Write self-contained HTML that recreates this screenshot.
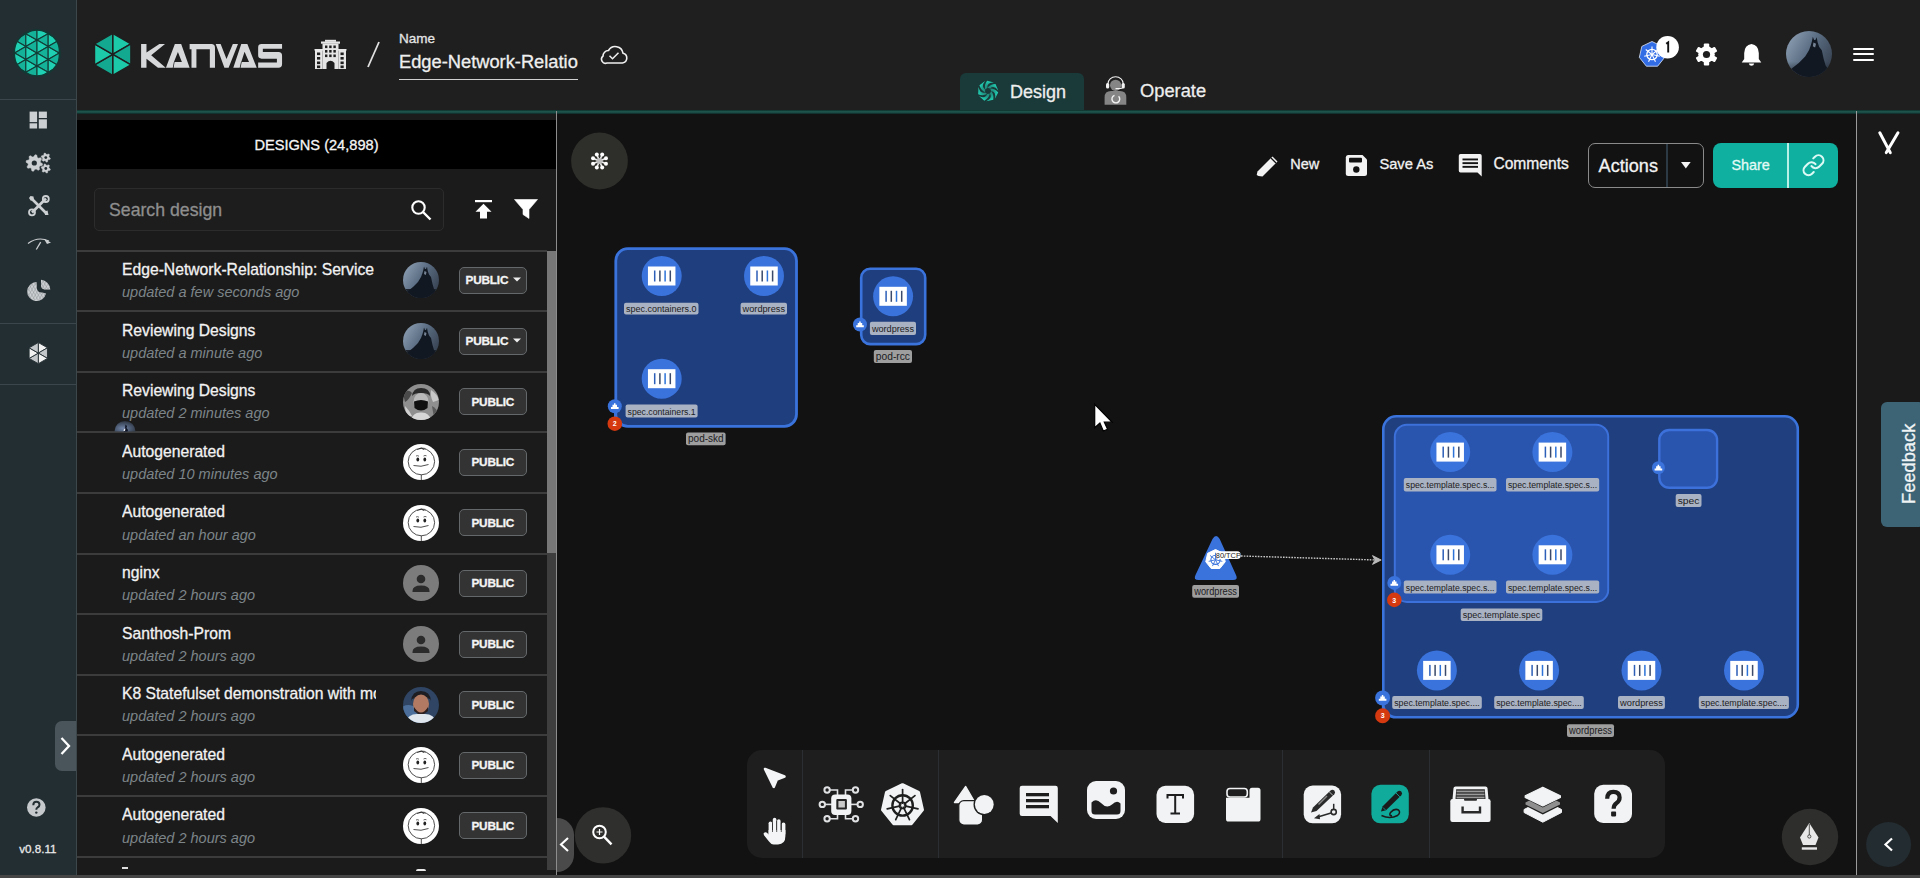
<!DOCTYPE html>
<html><head><meta charset="utf-8"><style>
html,body{margin:0;padding:0;width:1920px;height:878px;overflow:hidden;background:#121212;}
.t{position:absolute;white-space:nowrap;font-family:"Liberation Sans", sans-serif;-webkit-text-stroke:0.3px currentColor;}
.it{-webkit-text-stroke:0.15px currentColor;}
.b{position:absolute;}
</style></head><body>
<div class="b" style="left:0px;top:0px;width:1920px;height:878px;background:#121212;"></div>
<div class="b" style="left:77px;top:0px;width:1843px;height:110px;background:#1f1f1f;"></div>
<div class="b" style="left:77px;top:110px;width:1843px;height:3.799999999999997px;background:linear-gradient(#0c2e2a,#215a52 45%,#184640 70%,#0d2422);"></div>
<div class="b" style="left:77px;top:113.8px;width:479px;height:6.200000000000003px;background:#1b1b1b;"></div>
<div class="b" style="left:0px;top:0px;width:76px;height:878px;background:#232e33;"></div>
<div class="b" style="left:76px;top:0px;width:1px;height:878px;background:#3c474c;"></div>
<div class="b" style="left:0px;top:99px;width:76px;height:1px;background:#3a464b;"></div>
<div class="b" style="left:0px;top:323px;width:76px;height:1px;background:#3a464b;"></div>
<div class="b" style="left:77px;top:120px;width:479px;height:758px;background:#1b1b1b;"></div>
<div class="b" style="left:77px;top:120px;width:479px;height:49px;background:#000;"></div>
<div class="b" style="left:556px;top:111px;width:1px;height:767px;background:#8d8d8d;"></div>
<div class="b" style="left:1857px;top:113.8px;width:63px;height:764.2px;background:#1a1a1a;"></div>
<div class="b" style="left:1856px;top:111px;width:1px;height:767px;background:#9a9a9a;"></div>
<div class="b" style="left:0px;top:875px;width:1920px;height:3px;background:#454545;"></div>
<svg class="b" style="left:0px;top:0px;" width="76" height="100" viewBox="0 0 76 100"><defs><clipPath id="lc"><circle cx="37" cy="53" r="23"/></clipPath></defs><g clip-path="url(#lc)"><polygon points="-7.69,1.40 -7.69,14.30 3.48,7.85" fill="#1fd0b2" stroke="#143c36" stroke-width="1.1" stroke-linejoin="round"/><polygon points="3.48,7.85 3.48,20.75 -7.69,14.30" fill="#15b29a" stroke="#143c36" stroke-width="1.1" stroke-linejoin="round"/><polygon points="-7.69,14.30 -7.69,27.20 3.48,20.75" fill="#1fd0b2" stroke="#143c36" stroke-width="1.1" stroke-linejoin="round"/><polygon points="3.48,20.75 3.48,33.65 -7.69,27.20" fill="#15b29a" stroke="#143c36" stroke-width="1.1" stroke-linejoin="round"/><polygon points="-7.69,27.20 -7.69,40.10 3.48,33.65" fill="#1fd0b2" stroke="#143c36" stroke-width="1.1" stroke-linejoin="round"/><polygon points="3.48,33.65 3.48,46.55 -7.69,40.10" fill="#15b29a" stroke="#143c36" stroke-width="1.1" stroke-linejoin="round"/><polygon points="-7.69,40.10 -7.69,53.00 3.48,46.55" fill="#1fd0b2" stroke="#143c36" stroke-width="1.1" stroke-linejoin="round"/><polygon points="3.48,46.55 3.48,59.45 -7.69,53.00" fill="#15b29a" stroke="#143c36" stroke-width="1.1" stroke-linejoin="round"/><polygon points="-7.69,53.00 -7.69,65.90 3.48,59.45" fill="#1fd0b2" stroke="#143c36" stroke-width="1.1" stroke-linejoin="round"/><polygon points="3.48,59.45 3.48,72.35 -7.69,65.90" fill="#15b29a" stroke="#143c36" stroke-width="1.1" stroke-linejoin="round"/><polygon points="-7.69,65.90 -7.69,78.80 3.48,72.35" fill="#1fd0b2" stroke="#143c36" stroke-width="1.1" stroke-linejoin="round"/><polygon points="3.48,72.35 3.48,85.25 -7.69,78.80" fill="#15b29a" stroke="#143c36" stroke-width="1.1" stroke-linejoin="round"/><polygon points="-7.69,78.80 -7.69,91.70 3.48,85.25" fill="#1fd0b2" stroke="#143c36" stroke-width="1.1" stroke-linejoin="round"/><polygon points="3.48,85.25 3.48,98.15 -7.69,91.70" fill="#15b29a" stroke="#143c36" stroke-width="1.1" stroke-linejoin="round"/><polygon points="-7.69,91.70 -7.69,104.60 3.48,98.15" fill="#1fd0b2" stroke="#143c36" stroke-width="1.1" stroke-linejoin="round"/><polygon points="3.48,98.15 3.48,111.05 -7.69,104.60" fill="#15b29a" stroke="#143c36" stroke-width="1.1" stroke-linejoin="round"/><polygon points="3.48,7.85 3.48,20.75 14.66,14.30" fill="#1fd0b2" stroke="#143c36" stroke-width="1.1" stroke-linejoin="round"/><polygon points="14.66,1.40 14.66,14.30 3.48,7.85" fill="#15b29a" stroke="#143c36" stroke-width="1.1" stroke-linejoin="round"/><polygon points="3.48,20.75 3.48,33.65 14.66,27.20" fill="#1fd0b2" stroke="#143c36" stroke-width="1.1" stroke-linejoin="round"/><polygon points="14.66,14.30 14.66,27.20 3.48,20.75" fill="#15b29a" stroke="#143c36" stroke-width="1.1" stroke-linejoin="round"/><polygon points="3.48,33.65 3.48,46.55 14.66,40.10" fill="#1fd0b2" stroke="#143c36" stroke-width="1.1" stroke-linejoin="round"/><polygon points="14.66,27.20 14.66,40.10 3.48,33.65" fill="#15b29a" stroke="#143c36" stroke-width="1.1" stroke-linejoin="round"/><polygon points="3.48,46.55 3.48,59.45 14.66,53.00" fill="#1fd0b2" stroke="#143c36" stroke-width="1.1" stroke-linejoin="round"/><polygon points="14.66,40.10 14.66,53.00 3.48,46.55" fill="#15b29a" stroke="#143c36" stroke-width="1.1" stroke-linejoin="round"/><polygon points="3.48,59.45 3.48,72.35 14.66,65.90" fill="#1fd0b2" stroke="#143c36" stroke-width="1.1" stroke-linejoin="round"/><polygon points="14.66,53.00 14.66,65.90 3.48,59.45" fill="#15b29a" stroke="#143c36" stroke-width="1.1" stroke-linejoin="round"/><polygon points="3.48,72.35 3.48,85.25 14.66,78.80" fill="#1fd0b2" stroke="#143c36" stroke-width="1.1" stroke-linejoin="round"/><polygon points="14.66,65.90 14.66,78.80 3.48,72.35" fill="#15b29a" stroke="#143c36" stroke-width="1.1" stroke-linejoin="round"/><polygon points="3.48,85.25 3.48,98.15 14.66,91.70" fill="#1fd0b2" stroke="#143c36" stroke-width="1.1" stroke-linejoin="round"/><polygon points="14.66,78.80 14.66,91.70 3.48,85.25" fill="#15b29a" stroke="#143c36" stroke-width="1.1" stroke-linejoin="round"/><polygon points="3.48,98.15 3.48,111.05 14.66,104.60" fill="#1fd0b2" stroke="#143c36" stroke-width="1.1" stroke-linejoin="round"/><polygon points="14.66,91.70 14.66,104.60 3.48,98.15" fill="#15b29a" stroke="#143c36" stroke-width="1.1" stroke-linejoin="round"/><polygon points="14.66,1.40 14.66,14.30 25.83,7.85" fill="#1fd0b2" stroke="#143c36" stroke-width="1.1" stroke-linejoin="round"/><polygon points="25.83,7.85 25.83,20.75 14.66,14.30" fill="#15b29a" stroke="#143c36" stroke-width="1.1" stroke-linejoin="round"/><polygon points="14.66,14.30 14.66,27.20 25.83,20.75" fill="#1fd0b2" stroke="#143c36" stroke-width="1.1" stroke-linejoin="round"/><polygon points="25.83,20.75 25.83,33.65 14.66,27.20" fill="#15b29a" stroke="#143c36" stroke-width="1.1" stroke-linejoin="round"/><polygon points="14.66,27.20 14.66,40.10 25.83,33.65" fill="#1fd0b2" stroke="#143c36" stroke-width="1.1" stroke-linejoin="round"/><polygon points="25.83,33.65 25.83,46.55 14.66,40.10" fill="#15b29a" stroke="#143c36" stroke-width="1.1" stroke-linejoin="round"/><polygon points="14.66,40.10 14.66,53.00 25.83,46.55" fill="#1fd0b2" stroke="#143c36" stroke-width="1.1" stroke-linejoin="round"/><polygon points="25.83,46.55 25.83,59.45 14.66,53.00" fill="#15b29a" stroke="#143c36" stroke-width="1.1" stroke-linejoin="round"/><polygon points="14.66,53.00 14.66,65.90 25.83,59.45" fill="#1fd0b2" stroke="#143c36" stroke-width="1.1" stroke-linejoin="round"/><polygon points="25.83,59.45 25.83,72.35 14.66,65.90" fill="#15b29a" stroke="#143c36" stroke-width="1.1" stroke-linejoin="round"/><polygon points="14.66,65.90 14.66,78.80 25.83,72.35" fill="#1fd0b2" stroke="#143c36" stroke-width="1.1" stroke-linejoin="round"/><polygon points="25.83,72.35 25.83,85.25 14.66,78.80" fill="#15b29a" stroke="#143c36" stroke-width="1.1" stroke-linejoin="round"/><polygon points="14.66,78.80 14.66,91.70 25.83,85.25" fill="#1fd0b2" stroke="#143c36" stroke-width="1.1" stroke-linejoin="round"/><polygon points="25.83,85.25 25.83,98.15 14.66,91.70" fill="#15b29a" stroke="#143c36" stroke-width="1.1" stroke-linejoin="round"/><polygon points="14.66,91.70 14.66,104.60 25.83,98.15" fill="#1fd0b2" stroke="#143c36" stroke-width="1.1" stroke-linejoin="round"/><polygon points="25.83,98.15 25.83,111.05 14.66,104.60" fill="#15b29a" stroke="#143c36" stroke-width="1.1" stroke-linejoin="round"/><polygon points="25.83,7.85 25.83,20.75 37.00,14.30" fill="#1fd0b2" stroke="#143c36" stroke-width="1.1" stroke-linejoin="round"/><polygon points="37.00,1.40 37.00,14.30 25.83,7.85" fill="#15b29a" stroke="#143c36" stroke-width="1.1" stroke-linejoin="round"/><polygon points="25.83,20.75 25.83,33.65 37.00,27.20" fill="#1fd0b2" stroke="#143c36" stroke-width="1.1" stroke-linejoin="round"/><polygon points="37.00,14.30 37.00,27.20 25.83,20.75" fill="#15b29a" stroke="#143c36" stroke-width="1.1" stroke-linejoin="round"/><polygon points="25.83,33.65 25.83,46.55 37.00,40.10" fill="#1fd0b2" stroke="#143c36" stroke-width="1.1" stroke-linejoin="round"/><polygon points="37.00,27.20 37.00,40.10 25.83,33.65" fill="#15b29a" stroke="#143c36" stroke-width="1.1" stroke-linejoin="round"/><polygon points="25.83,46.55 25.83,59.45 37.00,53.00" fill="#1fd0b2" stroke="#143c36" stroke-width="1.1" stroke-linejoin="round"/><polygon points="37.00,40.10 37.00,53.00 25.83,46.55" fill="#15b29a" stroke="#143c36" stroke-width="1.1" stroke-linejoin="round"/><polygon points="25.83,59.45 25.83,72.35 37.00,65.90" fill="#1fd0b2" stroke="#143c36" stroke-width="1.1" stroke-linejoin="round"/><polygon points="37.00,53.00 37.00,65.90 25.83,59.45" fill="#15b29a" stroke="#143c36" stroke-width="1.1" stroke-linejoin="round"/><polygon points="25.83,72.35 25.83,85.25 37.00,78.80" fill="#1fd0b2" stroke="#143c36" stroke-width="1.1" stroke-linejoin="round"/><polygon points="37.00,65.90 37.00,78.80 25.83,72.35" fill="#15b29a" stroke="#143c36" stroke-width="1.1" stroke-linejoin="round"/><polygon points="25.83,85.25 25.83,98.15 37.00,91.70" fill="#1fd0b2" stroke="#143c36" stroke-width="1.1" stroke-linejoin="round"/><polygon points="37.00,78.80 37.00,91.70 25.83,85.25" fill="#15b29a" stroke="#143c36" stroke-width="1.1" stroke-linejoin="round"/><polygon points="25.83,98.15 25.83,111.05 37.00,104.60" fill="#1fd0b2" stroke="#143c36" stroke-width="1.1" stroke-linejoin="round"/><polygon points="37.00,91.70 37.00,104.60 25.83,98.15" fill="#15b29a" stroke="#143c36" stroke-width="1.1" stroke-linejoin="round"/><polygon points="37.00,1.40 37.00,14.30 48.17,7.85" fill="#1fd0b2" stroke="#143c36" stroke-width="1.1" stroke-linejoin="round"/><polygon points="48.17,7.85 48.17,20.75 37.00,14.30" fill="#15b29a" stroke="#143c36" stroke-width="1.1" stroke-linejoin="round"/><polygon points="37.00,14.30 37.00,27.20 48.17,20.75" fill="#1fd0b2" stroke="#143c36" stroke-width="1.1" stroke-linejoin="round"/><polygon points="48.17,20.75 48.17,33.65 37.00,27.20" fill="#15b29a" stroke="#143c36" stroke-width="1.1" stroke-linejoin="round"/><polygon points="37.00,27.20 37.00,40.10 48.17,33.65" fill="#1fd0b2" stroke="#143c36" stroke-width="1.1" stroke-linejoin="round"/><polygon points="48.17,33.65 48.17,46.55 37.00,40.10" fill="#15b29a" stroke="#143c36" stroke-width="1.1" stroke-linejoin="round"/><polygon points="37.00,40.10 37.00,53.00 48.17,46.55" fill="#1fd0b2" stroke="#143c36" stroke-width="1.1" stroke-linejoin="round"/><polygon points="48.17,46.55 48.17,59.45 37.00,53.00" fill="#15b29a" stroke="#143c36" stroke-width="1.1" stroke-linejoin="round"/><polygon points="37.00,53.00 37.00,65.90 48.17,59.45" fill="#1fd0b2" stroke="#143c36" stroke-width="1.1" stroke-linejoin="round"/><polygon points="48.17,59.45 48.17,72.35 37.00,65.90" fill="#15b29a" stroke="#143c36" stroke-width="1.1" stroke-linejoin="round"/><polygon points="37.00,65.90 37.00,78.80 48.17,72.35" fill="#1fd0b2" stroke="#143c36" stroke-width="1.1" stroke-linejoin="round"/><polygon points="48.17,72.35 48.17,85.25 37.00,78.80" fill="#15b29a" stroke="#143c36" stroke-width="1.1" stroke-linejoin="round"/><polygon points="37.00,78.80 37.00,91.70 48.17,85.25" fill="#1fd0b2" stroke="#143c36" stroke-width="1.1" stroke-linejoin="round"/><polygon points="48.17,85.25 48.17,98.15 37.00,91.70" fill="#15b29a" stroke="#143c36" stroke-width="1.1" stroke-linejoin="round"/><polygon points="37.00,91.70 37.00,104.60 48.17,98.15" fill="#1fd0b2" stroke="#143c36" stroke-width="1.1" stroke-linejoin="round"/><polygon points="48.17,98.15 48.17,111.05 37.00,104.60" fill="#15b29a" stroke="#143c36" stroke-width="1.1" stroke-linejoin="round"/><polygon points="48.17,7.85 48.17,20.75 59.34,14.30" fill="#1fd0b2" stroke="#143c36" stroke-width="1.1" stroke-linejoin="round"/><polygon points="59.34,1.40 59.34,14.30 48.17,7.85" fill="#15b29a" stroke="#143c36" stroke-width="1.1" stroke-linejoin="round"/><polygon points="48.17,20.75 48.17,33.65 59.34,27.20" fill="#1fd0b2" stroke="#143c36" stroke-width="1.1" stroke-linejoin="round"/><polygon points="59.34,14.30 59.34,27.20 48.17,20.75" fill="#15b29a" stroke="#143c36" stroke-width="1.1" stroke-linejoin="round"/><polygon points="48.17,33.65 48.17,46.55 59.34,40.10" fill="#1fd0b2" stroke="#143c36" stroke-width="1.1" stroke-linejoin="round"/><polygon points="59.34,27.20 59.34,40.10 48.17,33.65" fill="#15b29a" stroke="#143c36" stroke-width="1.1" stroke-linejoin="round"/><polygon points="48.17,46.55 48.17,59.45 59.34,53.00" fill="#1fd0b2" stroke="#143c36" stroke-width="1.1" stroke-linejoin="round"/><polygon points="59.34,40.10 59.34,53.00 48.17,46.55" fill="#15b29a" stroke="#143c36" stroke-width="1.1" stroke-linejoin="round"/><polygon points="48.17,59.45 48.17,72.35 59.34,65.90" fill="#1fd0b2" stroke="#143c36" stroke-width="1.1" stroke-linejoin="round"/><polygon points="59.34,53.00 59.34,65.90 48.17,59.45" fill="#15b29a" stroke="#143c36" stroke-width="1.1" stroke-linejoin="round"/><polygon points="48.17,72.35 48.17,85.25 59.34,78.80" fill="#1fd0b2" stroke="#143c36" stroke-width="1.1" stroke-linejoin="round"/><polygon points="59.34,65.90 59.34,78.80 48.17,72.35" fill="#15b29a" stroke="#143c36" stroke-width="1.1" stroke-linejoin="round"/><polygon points="48.17,85.25 48.17,98.15 59.34,91.70" fill="#1fd0b2" stroke="#143c36" stroke-width="1.1" stroke-linejoin="round"/><polygon points="59.34,78.80 59.34,91.70 48.17,85.25" fill="#15b29a" stroke="#143c36" stroke-width="1.1" stroke-linejoin="round"/><polygon points="48.17,98.15 48.17,111.05 59.34,104.60" fill="#1fd0b2" stroke="#143c36" stroke-width="1.1" stroke-linejoin="round"/><polygon points="59.34,91.70 59.34,104.60 48.17,98.15" fill="#15b29a" stroke="#143c36" stroke-width="1.1" stroke-linejoin="round"/><polygon points="59.34,1.40 59.34,14.30 70.52,7.85" fill="#1fd0b2" stroke="#143c36" stroke-width="1.1" stroke-linejoin="round"/><polygon points="70.52,7.85 70.52,20.75 59.34,14.30" fill="#15b29a" stroke="#143c36" stroke-width="1.1" stroke-linejoin="round"/><polygon points="59.34,14.30 59.34,27.20 70.52,20.75" fill="#1fd0b2" stroke="#143c36" stroke-width="1.1" stroke-linejoin="round"/><polygon points="70.52,20.75 70.52,33.65 59.34,27.20" fill="#15b29a" stroke="#143c36" stroke-width="1.1" stroke-linejoin="round"/><polygon points="59.34,27.20 59.34,40.10 70.52,33.65" fill="#1fd0b2" stroke="#143c36" stroke-width="1.1" stroke-linejoin="round"/><polygon points="70.52,33.65 70.52,46.55 59.34,40.10" fill="#15b29a" stroke="#143c36" stroke-width="1.1" stroke-linejoin="round"/><polygon points="59.34,40.10 59.34,53.00 70.52,46.55" fill="#1fd0b2" stroke="#143c36" stroke-width="1.1" stroke-linejoin="round"/><polygon points="70.52,46.55 70.52,59.45 59.34,53.00" fill="#15b29a" stroke="#143c36" stroke-width="1.1" stroke-linejoin="round"/><polygon points="59.34,53.00 59.34,65.90 70.52,59.45" fill="#1fd0b2" stroke="#143c36" stroke-width="1.1" stroke-linejoin="round"/><polygon points="70.52,59.45 70.52,72.35 59.34,65.90" fill="#15b29a" stroke="#143c36" stroke-width="1.1" stroke-linejoin="round"/><polygon points="59.34,65.90 59.34,78.80 70.52,72.35" fill="#1fd0b2" stroke="#143c36" stroke-width="1.1" stroke-linejoin="round"/><polygon points="70.52,72.35 70.52,85.25 59.34,78.80" fill="#15b29a" stroke="#143c36" stroke-width="1.1" stroke-linejoin="round"/><polygon points="59.34,78.80 59.34,91.70 70.52,85.25" fill="#1fd0b2" stroke="#143c36" stroke-width="1.1" stroke-linejoin="round"/><polygon points="70.52,85.25 70.52,98.15 59.34,91.70" fill="#15b29a" stroke="#143c36" stroke-width="1.1" stroke-linejoin="round"/><polygon points="59.34,91.70 59.34,104.60 70.52,98.15" fill="#1fd0b2" stroke="#143c36" stroke-width="1.1" stroke-linejoin="round"/><polygon points="70.52,98.15 70.52,111.05 59.34,104.60" fill="#15b29a" stroke="#143c36" stroke-width="1.1" stroke-linejoin="round"/><polygon points="70.52,7.85 70.52,20.75 81.69,14.30" fill="#1fd0b2" stroke="#143c36" stroke-width="1.1" stroke-linejoin="round"/><polygon points="81.69,1.40 81.69,14.30 70.52,7.85" fill="#15b29a" stroke="#143c36" stroke-width="1.1" stroke-linejoin="round"/><polygon points="70.52,20.75 70.52,33.65 81.69,27.20" fill="#1fd0b2" stroke="#143c36" stroke-width="1.1" stroke-linejoin="round"/><polygon points="81.69,14.30 81.69,27.20 70.52,20.75" fill="#15b29a" stroke="#143c36" stroke-width="1.1" stroke-linejoin="round"/><polygon points="70.52,33.65 70.52,46.55 81.69,40.10" fill="#1fd0b2" stroke="#143c36" stroke-width="1.1" stroke-linejoin="round"/><polygon points="81.69,27.20 81.69,40.10 70.52,33.65" fill="#15b29a" stroke="#143c36" stroke-width="1.1" stroke-linejoin="round"/><polygon points="70.52,46.55 70.52,59.45 81.69,53.00" fill="#1fd0b2" stroke="#143c36" stroke-width="1.1" stroke-linejoin="round"/><polygon points="81.69,40.10 81.69,53.00 70.52,46.55" fill="#15b29a" stroke="#143c36" stroke-width="1.1" stroke-linejoin="round"/><polygon points="70.52,59.45 70.52,72.35 81.69,65.90" fill="#1fd0b2" stroke="#143c36" stroke-width="1.1" stroke-linejoin="round"/><polygon points="81.69,53.00 81.69,65.90 70.52,59.45" fill="#15b29a" stroke="#143c36" stroke-width="1.1" stroke-linejoin="round"/><polygon points="70.52,72.35 70.52,85.25 81.69,78.80" fill="#1fd0b2" stroke="#143c36" stroke-width="1.1" stroke-linejoin="round"/><polygon points="81.69,65.90 81.69,78.80 70.52,72.35" fill="#15b29a" stroke="#143c36" stroke-width="1.1" stroke-linejoin="round"/><polygon points="70.52,85.25 70.52,98.15 81.69,91.70" fill="#1fd0b2" stroke="#143c36" stroke-width="1.1" stroke-linejoin="round"/><polygon points="81.69,78.80 81.69,91.70 70.52,85.25" fill="#15b29a" stroke="#143c36" stroke-width="1.1" stroke-linejoin="round"/><polygon points="70.52,98.15 70.52,111.05 81.69,104.60" fill="#1fd0b2" stroke="#143c36" stroke-width="1.1" stroke-linejoin="round"/><polygon points="81.69,91.70 81.69,104.60 70.52,98.15" fill="#15b29a" stroke="#143c36" stroke-width="1.1" stroke-linejoin="round"/></g><circle cx="37" cy="53" r="23" fill="none" stroke="#113a34" stroke-width="1.5"/></svg>
<svg class="b" style="left:80px;top:20px;" width="70" height="70" viewBox="80 20 70 70"><polygon points="112.7,54.3 112.70,33.30 130.89,43.80" fill="#1ccaa9" stroke="#1f1f1f" stroke-width="1.4" stroke-linejoin="round"/><polygon points="112.7,54.3 130.89,43.80 130.89,64.80" fill="#13a890" stroke="#1f1f1f" stroke-width="1.4" stroke-linejoin="round"/><polygon points="112.7,54.3 130.89,64.80 112.70,75.30" fill="#1ccaa9" stroke="#1f1f1f" stroke-width="1.4" stroke-linejoin="round"/><polygon points="112.7,54.3 112.70,75.30 94.51,64.80" fill="#13a890" stroke="#1f1f1f" stroke-width="1.4" stroke-linejoin="round"/><polygon points="112.7,54.3 94.51,64.80 94.51,43.80" fill="#1ccaa9" stroke="#1f1f1f" stroke-width="1.4" stroke-linejoin="round"/><polygon points="112.7,54.3 94.51,43.80 112.70,33.30" fill="#13a890" stroke="#1f1f1f" stroke-width="1.4" stroke-linejoin="round"/></svg>
<svg class="b" style="left:135px;top:38px;" width="155" height="34" viewBox="0 0 3306 725"><path d="M130,130 H245 V310 L520,130 H640 L345,370 L655,635 H490 L245,440 V635 H130 Z M660,635 L850,130 H985 L1165,635 Z M1165,130 H1630 Q1706,130 1706,206 V635 H1596 V240 H1310 V635 H1205 V240 H1165 Z M1721.7,130 H1826.7 L1951.7,450 L2086.7,130 H2196.7 L1996.7,635 H1906.7 Z M2096.7,635 L2266.7,130 H2396.7 L2596.7,635 Z M2700,130 H3136.7 V230 H2726.7 V300 H3060 Q3136.7,300 3136.7,380 V555 Q3136.7,635 3060,635 H2626.7 V520 H3026.7 V440 H2700 Q2626.7,440 2626.7,370 V200 Q2626.7,130 2700,130 Z" fill="#d6d8da"/><path d="M830,510 L915,300 L1000,510 Z M805,640 L830,505 L845,505 L822,640 Z M2266.7,510 L2336.7,295 L2431.7,510 Z M2232,640 L2262,505 L2277,505 L2250,640 Z" fill="#1f1f1f"/></svg>
<svg class="b" style="left:300px;top:30px;" width="60" height="45" viewBox="300 30 60 45"><rect x="322.5" y="43.5" width="16" height="25.5" fill="#e6e6e6"/><rect x="321" y="41.5" width="19" height="2.2" fill="#e6e6e6"/><rect x="325" y="39.8" width="11" height="2" fill="#e6e6e6"/><rect x="315" y="50" width="7.5" height="19" fill="#e6e6e6"/><rect x="338.5" y="50" width="7.5" height="19" fill="#e6e6e6"/><rect x="314.5" y="49" width="8.5" height="1.6" fill="#e6e6e6"/><rect x="338" y="49" width="8.5" height="1.6" fill="#e6e6e6"/><rect x="325" y="45.5" width="2.4" height="2.6" fill="#1f1f1f"/><rect x="329.2" y="45.5" width="2.4" height="2.6" fill="#1f1f1f"/><rect x="333.4" y="45.5" width="2.4" height="2.6" fill="#1f1f1f"/><rect x="325" y="50" width="2.4" height="2.6" fill="#1f1f1f"/><rect x="329.2" y="50" width="2.4" height="2.6" fill="#1f1f1f"/><rect x="333.4" y="50" width="2.4" height="2.6" fill="#1f1f1f"/><rect x="325" y="54.5" width="2.4" height="2.6" fill="#1f1f1f"/><rect x="329.2" y="54.5" width="2.4" height="2.6" fill="#1f1f1f"/><rect x="333.4" y="54.5" width="2.4" height="2.6" fill="#1f1f1f"/><rect x="317" y="52.5" width="3.2" height="2.6" fill="#1f1f1f"/><rect x="340.5" y="52.5" width="3.2" height="2.6" fill="#1f1f1f"/><rect x="317" y="57" width="3.2" height="2.6" fill="#1f1f1f"/><rect x="340.5" y="57" width="3.2" height="2.6" fill="#1f1f1f"/><rect x="317" y="61.5" width="3.2" height="2.6" fill="#1f1f1f"/><rect x="340.5" y="61.5" width="3.2" height="2.6" fill="#1f1f1f"/><rect x="317" y="65.5" width="3.2" height="2.6" fill="#1f1f1f"/><rect x="340.5" y="65.5" width="3.2" height="2.6" fill="#1f1f1f"/><path d="M326.5,69 V63 Q330.5,58.5 334.5,63 V69 Z" fill="#1f1f1f"/></svg>
<svg class="b" style="left:360px;top:38px;" width="25" height="32" viewBox="360 38 25 32"><line x1="379" y1="42" x2="368" y2="67" stroke="#e0e0e0" stroke-width="1.8"/></svg>
<div class="t" style="left:399px;top:31.57px;font-size:13.5px;line-height:13.5px;color:#e4e4e4;font-weight:normal;font-style:normal;">Name</div>
<div class="t" style="left:399px;top:52.51px;font-size:18.3px;line-height:18.3px;color:#efefef;font-weight:normal;font-style:normal;">Edge-Network-Relatio</div>
<div class="b" style="left:399px;top:78.5px;width:179px;height:1.5px;background:#d0d0d0;"></div>
<svg class="b" style="left:595px;top:40px;" width="38" height="30" viewBox="595 40 38 30"><path d="M607,63 H622.5 A5,5 0 0 0 623,53.2 A7.8,7.8 0 0 0 608.5,50.5 A5.5,5.5 0 0 0 603,56.2 A4,4 0 0 0 607,63 Z" fill="none" stroke="#f0f0f0" stroke-width="1.6"/><path d="M609.5,55.8 L612.5,58.8 L618.5,52.8" fill="none" stroke="#f0f0f0" stroke-width="1.5"/></svg>
<div class="b" style="left:960px;top:72.5px;width:124px;height:37.5px;background:#193a39;border-radius:6px 6px 0 0;"></div>
<svg class="b" style="left:975px;top:78px;" width="26" height="26" viewBox="975 78 26 26"><defs><radialGradient id="dg" gradientUnits="userSpaceOnUse" cx="988" cy="91" r="10.5"><stop offset="0" stop-color="#2a6e66"/><stop offset="0.55" stop-color="#1f9c8a"/><stop offset="1" stop-color="#22d6b8"/></radialGradient></defs><path d="M991.20,91.00 Q996.47,91.74 994.89,98.65 L998.20,92.43 Q995.13,88.68 990.06,88.55 Z" fill="url(#dg)"/><path d="M990.00,93.50 Q992.70,98.08 986.31,101.16 L993.24,99.87 Q994.26,95.13 991.20,91.08 Z" fill="url(#dg)"/><path d="M987.29,94.12 Q985.39,99.09 979.00,96.02 L984.33,100.63 Q988.67,98.47 989.93,93.55 Z" fill="url(#dg)"/><path d="M985.12,92.39 Q980.05,94.01 978.47,87.09 L978.19,94.13 Q982.58,96.18 987.21,94.10 Z" fill="url(#dg)"/><path d="M985.12,89.61 Q980.69,86.66 985.11,81.11 L979.43,85.28 Q980.57,89.99 985.08,92.32 Z" fill="url(#dg)"/><path d="M987.29,87.88 Q986.84,82.58 993.93,82.58 L987.13,80.74 Q984.15,84.56 985.15,89.54 Z" fill="url(#dg)"/><path d="M990.00,88.50 Q993.86,84.84 998.28,90.38 L995.48,83.92 Q990.64,83.98 987.37,87.86 Z" fill="url(#dg)"/></svg>
<div class="t" style="left:1010px;top:82.56px;font-size:18px;line-height:18px;color:#eeeeee;font-weight:normal;font-style:normal;">Design</div>
<svg class="b" style="left:1100px;top:75px;" width="32" height="32" viewBox="1100 75 32 32"><circle cx="1115.6" cy="85.3" r="5.6" fill="#858585"/><path d="M1104.6,104.8 V97.5 Q1104.6,91.1 1111,91.1 H1120 Q1126.3,91.1 1126.3,97.5 V104.8 Z" fill="#858585"/><path d="M1107.9,85.5 V84 A7.7,7.2 0 0 1 1123.3,84 V85.5" fill="none" stroke="#f2f2f2" stroke-width="1.1"/><rect x="1106" y="83" width="3.2" height="5.4" rx="1.5" fill="#f2f2f2"/><rect x="1121.6" y="83" width="3.2" height="5.4" rx="1.5" fill="#f2f2f2"/><path d="M1122.5,88 Q1121.5,88.6 1115.5,88.6" fill="none" stroke="#f2f2f2" stroke-width="1.2"/><path d="M1114.5,95.3 A3.9,3.9 0 1 0 1118.6,96.2" fill="none" stroke="#f2f2f2" stroke-width="1.4"/></svg>
<div class="t" style="left:1140px;top:82.31px;font-size:18.3px;line-height:18.3px;color:#eeeeee;font-weight:normal;font-style:normal;">Operate</div>
<svg class="b" style="left:1630px;top:30px;" width="50" height="50" viewBox="1630 30 50 50"><polygon points="1652.00,41.50 1662.16,46.39 1664.67,57.39 1657.64,66.21 1646.36,66.21 1639.33,57.39 1641.84,46.39" fill="#326de6" stroke="#dfe8fb" stroke-width="0.8" stroke-linejoin="round"/><circle cx="1652" cy="54.5" r="5.2" fill="none" stroke="#fff" stroke-width="1.3"/><line x1="1652" y1="54.5" x2="1652.00" y2="46.50" stroke="#fff" stroke-width="1.1"/><line x1="1652" y1="54.5" x2="1658.25" y2="49.51" stroke="#fff" stroke-width="1.1"/><line x1="1652" y1="54.5" x2="1659.80" y2="56.28" stroke="#fff" stroke-width="1.1"/><line x1="1652" y1="54.5" x2="1655.47" y2="61.71" stroke="#fff" stroke-width="1.1"/><line x1="1652" y1="54.5" x2="1648.53" y2="61.71" stroke="#fff" stroke-width="1.1"/><line x1="1652" y1="54.5" x2="1644.20" y2="56.28" stroke="#fff" stroke-width="1.1"/><line x1="1652" y1="54.5" x2="1645.75" y2="49.51" stroke="#fff" stroke-width="1.1"/><circle cx="1667.6" cy="47.3" r="11.3" fill="#fff"/><path d="M1666.2,43.8 L1668.2,42.3 V52.5" fill="none" stroke="#111" stroke-width="1.9"/></svg>
<svg class="b" style="left:1690px;top:38px;" width="34" height="34" viewBox="1690 38 34 34"><rect x="1703.8" y="43.4" width="5.4" height="5.5" rx="1" fill="#fff" transform="rotate(0 1706.5 54.5)"/><rect x="1703.8" y="43.4" width="5.4" height="5.5" rx="1" fill="#fff" transform="rotate(60 1706.5 54.5)"/><rect x="1703.8" y="43.4" width="5.4" height="5.5" rx="1" fill="#fff" transform="rotate(120 1706.5 54.5)"/><rect x="1703.8" y="43.4" width="5.4" height="5.5" rx="1" fill="#fff" transform="rotate(180 1706.5 54.5)"/><rect x="1703.8" y="43.4" width="5.4" height="5.5" rx="1" fill="#fff" transform="rotate(240 1706.5 54.5)"/><rect x="1703.8" y="43.4" width="5.4" height="5.5" rx="1" fill="#fff" transform="rotate(300 1706.5 54.5)"/><circle cx="1706.5" cy="54.5" r="8.3" fill="#fff"/><circle cx="1706.5" cy="54.5" r="3.6" fill="#1f1f1f"/></svg>
<svg class="b" style="left:1736px;top:38px;" width="32" height="32" viewBox="1736 38 32 32"><path d="M1751.5,44 Q1744.5,45 1744.2,53 V59 L1741.7,62.5 H1761.3 L1758.8,59 V53 Q1758.5,45 1751.5,44 Z" fill="#fff"/><path d="M1748.8,63.5 H1754.2 Q1753.8,65.8 1751.5,65.8 Q1749.2,65.8 1748.8,63.5 Z" fill="#fff"/></svg>
<svg class="b" style="left:1786.4px;top:31.4px;" width="46" height="46" viewBox="0 0 46 46"><defs><linearGradient id="ghdr" x1="0" y1="0" x2="1" y2="0.6"><stop offset="0" stop-color="#94a7bb"/><stop offset="0.55" stop-color="#5b6d82"/><stop offset="1" stop-color="#3a4656"/></linearGradient><linearGradient id="hhdr" x1="0" y1="0" x2="0" y2="1"><stop offset="0" stop-color="#2a3340" stop-opacity="0"/><stop offset="1" stop-color="#1c2129"/></linearGradient><clipPath id="chdr"><circle cx="23" cy="23" r="23"/></clipPath></defs><g clip-path="url(#chdr)"><rect width="46" height="46" fill="url(#ghdr)"/><g transform="scale(1.2777777777777777)"><rect x="0" y="24" width="36" height="12" fill="url(#hhdr)"/><path d="M21,4.5 L22,7 L23,7 L24,4.8 L24.8,9 L26,12.5 L28,15 L29.5,22 L31,27 L33,30 L36,36 L0,36 L0,33 L5,29 L10,25 L15,20 L18,15 L19.5,11 L20.3,8 Z" fill="#121822"/><path d="M21.5,9 L23.5,10 L22.8,13 L21,12 Z" fill="#9fb0c4" opacity="0.7"/></g></g></svg>
<div class="b" style="left:1852.7px;top:47.800000000000004px;width:21.700000000000045px;height:2.5999999999999943px;background:#fff;border-radius:1px;"></div>
<div class="b" style="left:1852.7px;top:52.800000000000004px;width:21.700000000000045px;height:2.5999999999999943px;background:#fff;border-radius:1px;"></div>
<div class="b" style="left:1852.7px;top:58.6px;width:21.700000000000045px;height:2.5999999999999943px;background:#fff;border-radius:1px;"></div>
<div class="t" style="left:254.4px;top:138.24px;font-size:14.6px;line-height:14.6px;color:#f5f5f5;font-weight:normal;font-style:normal;">DESIGNS (24,898)</div>
<div class="b" style="left:94px;top:188px;width:350px;height:43px;background:#1d1d1d;border:1px solid #2c2c2c;border-radius:5px;box-sizing:border-box;"></div>
<div class="t" style="left:109px;top:202.02px;font-size:17.7px;line-height:17.7px;color:#8e8e8e;font-weight:normal;font-style:normal;">Search design</div>
<svg class="b" style="left:405px;top:195px;" width="32" height="28" viewBox="405 195 32 28"><circle cx="418.5" cy="207.5" r="6.2" fill="none" stroke="#fff" stroke-width="2.1"/><line x1="423" y1="212" x2="430.5" y2="219.5" stroke="#fff" stroke-width="2.4"/></svg>
<svg class="b" style="left:470px;top:195px;" width="28" height="28" viewBox="470 195 28 28"><rect x="475" y="200" width="17" height="2.2" fill="#fff"/><path d="M483.5,203.8 L491.5,211.8 H487 V218.5 H480 V211.8 H475.5 Z" fill="#fff"/></svg>
<svg class="b" style="left:510px;top:195px;" width="32" height="28" viewBox="510 195 32 28"><path d="M514.5,199.5 H537.5 L529,209.5 V218.5 L523,214.5 V209.5 Z" fill="#fff" stroke="#fff" stroke-width="0.6" stroke-linejoin="round"/></svg>
<div class="b" style="left:77px;top:249.5px;width:470px;height:2.0px;background:#3c3c3c;"></div>
<div class="b" style="left:77px;top:310.1px;width:470px;height:2.0px;background:#3c3c3c;"></div>
<div class="b" style="left:77px;top:370.7px;width:470px;height:2.0px;background:#3c3c3c;"></div>
<div class="b" style="left:77px;top:431.3px;width:470px;height:2.0px;background:#3c3c3c;"></div>
<div class="b" style="left:77px;top:491.9px;width:470px;height:2.0px;background:#3c3c3c;"></div>
<div class="b" style="left:77px;top:552.5px;width:470px;height:2.0px;background:#3c3c3c;"></div>
<div class="b" style="left:77px;top:613.1px;width:470px;height:2.0px;background:#3c3c3c;"></div>
<div class="b" style="left:77px;top:673.7px;width:470px;height:2.0px;background:#3c3c3c;"></div>
<div class="b" style="left:77px;top:734.3px;width:470px;height:2.0px;background:#3c3c3c;"></div>
<div class="b" style="left:77px;top:794.9px;width:470px;height:2.0px;background:#3c3c3c;"></div>
<div class="b" style="left:77px;top:855.5px;width:470px;height:2.0px;background:#3c3c3c;"></div>
<div class="b" style="left:122px;top:255.3px;width:254px;height:28px;overflow:hidden;"><div class="t" style="left:0px;top:6.71px;font-size:15.7px;line-height:15.7px;color:#f2f2f2;font-weight:normal;font-style:normal;">Edge-Network-Relationship: Service</div></div>
<div class="t" style="left:122px;top:285.23px;font-size:14.5px;line-height:14.5px;color:#7d8589;font-weight:normal;font-style:italic;-webkit-text-stroke:0;">updated a few seconds ago</div>
<svg class="b" style="left:403px;top:262.3px;" width="36" height="36" viewBox="0 0 36 36"><defs><linearGradient id="gr0" x1="0" y1="0" x2="1" y2="0.6"><stop offset="0" stop-color="#94a7bb"/><stop offset="0.55" stop-color="#5b6d82"/><stop offset="1" stop-color="#3a4656"/></linearGradient><clipPath id="cr0"><circle cx="18" cy="18" r="18"/></clipPath></defs><g clip-path="url(#cr0)"><rect width="36" height="36" fill="url(#gr0)"/><g transform="scale(1.0)"><rect x="0" y="27" width="36" height="9" fill="#1f252e"/><path d="M21,4.5 L22,7 L23,7 L24,4.8 L24.8,9 L26,12.5 L28,15 L29.5,22 L31,27 L33,30 L36,36 L0,36 L0,33 L5,29 L10,25 L15,20 L18,15 L19.5,11 L20.3,8 Z" fill="#121822"/><path d="M21.5,9 L23.5,10 L22.8,13 L21,12 Z" fill="#9fb0c4" opacity="0.7"/></g></g></svg>
<div class="b" style="left:459px;top:267.0px;width:68px;height:27.0px;background:#333333;border:1px solid #64686a;border-radius:5px;box-sizing:border-box;"></div>
<div class="t" style="left:465.5px;top:275.11px;font-size:11.8px;line-height:11.8px;color:#f4f4f4;font-weight:bold;font-style:normal;letter-spacing:-0.2px;">PUBLIC</div>
<svg class="b" style="left:510px;top:274.3px;" width="14" height="10" viewBox="0 0 14 10"><path d="M3,3.6 H11 L7,7.6 Z" fill="#eee"/></svg>
<div class="b" style="left:122px;top:315.9px;width:254px;height:28px;overflow:hidden;"><div class="t" style="left:0px;top:6.71px;font-size:15.7px;line-height:15.7px;color:#f2f2f2;font-weight:normal;font-style:normal;">Reviewing Designs</div></div>
<div class="t" style="left:122px;top:345.83px;font-size:14.5px;line-height:14.5px;color:#7d8589;font-weight:normal;font-style:italic;-webkit-text-stroke:0;">updated a minute ago</div>
<svg class="b" style="left:403px;top:322.90000000000003px;" width="36" height="36" viewBox="0 0 36 36"><defs><linearGradient id="gr1" x1="0" y1="0" x2="1" y2="0.6"><stop offset="0" stop-color="#94a7bb"/><stop offset="0.55" stop-color="#5b6d82"/><stop offset="1" stop-color="#3a4656"/></linearGradient><clipPath id="cr1"><circle cx="18" cy="18" r="18"/></clipPath></defs><g clip-path="url(#cr1)"><rect width="36" height="36" fill="url(#gr1)"/><g transform="scale(1.0)"><rect x="0" y="27" width="36" height="9" fill="#1f252e"/><path d="M21,4.5 L22,7 L23,7 L24,4.8 L24.8,9 L26,12.5 L28,15 L29.5,22 L31,27 L33,30 L36,36 L0,36 L0,33 L5,29 L10,25 L15,20 L18,15 L19.5,11 L20.3,8 Z" fill="#121822"/><path d="M21.5,9 L23.5,10 L22.8,13 L21,12 Z" fill="#9fb0c4" opacity="0.7"/></g></g></svg>
<div class="b" style="left:459px;top:327.6px;width:68px;height:27.0px;background:#333333;border:1px solid #64686a;border-radius:5px;box-sizing:border-box;"></div>
<div class="t" style="left:465.5px;top:335.71px;font-size:11.8px;line-height:11.8px;color:#f4f4f4;font-weight:bold;font-style:normal;letter-spacing:-0.2px;">PUBLIC</div>
<svg class="b" style="left:510px;top:334.90000000000003px;" width="14" height="10" viewBox="0 0 14 10"><path d="M3,3.6 H11 L7,7.6 Z" fill="#eee"/></svg>
<div class="b" style="left:122px;top:376.5px;width:254px;height:28px;overflow:hidden;"><div class="t" style="left:0px;top:6.71px;font-size:15.7px;line-height:15.7px;color:#f2f2f2;font-weight:normal;font-style:normal;">Reviewing Designs</div></div>
<div class="t" style="left:122px;top:406.43px;font-size:14.5px;line-height:14.5px;color:#7d8589;font-weight:normal;font-style:italic;-webkit-text-stroke:0;">updated 2 minutes ago</div>
<svg class="b" style="left:403px;top:383.5px;" width="36" height="36" viewBox="0 0 36 36"><defs><clipPath id="cr2"><circle cx="18" cy="18" r="18"/></clipPath></defs><g clip-path="url(#cr2)"><rect width="36" height="36" fill="#8f8f8f"/><g transform="scale(1.0)"><path d="M0,10 Q5,4 9,9 Q6,16 2,18 Z" fill="#4a4a4a"/><path d="M28,6 Q34,10 36,16 L30,18 Q27,12 28,6 Z" fill="#c8c8c8"/><path d="M2,22 Q6,26 9,32 L3,33 Z" fill="#d0d0d0"/><path d="M29,22 Q33,24 36,30 L31,34 Z" fill="#5a5a5a"/><path d="M9,12 Q10,4 18,4 Q27,4 27,12 Q25,9 18,9 Q11,9 9,12 Z" fill="#2a2a2a"/><ellipse cx="18" cy="17.5" rx="7.5" ry="8.5" fill="#b9b9b9"/><path d="M11,17.5 Q18,14.5 25,17.5 L24.5,24 Q18,29 11.5,24 Z" fill="#111"/><path d="M8,36 Q10,28 18,28.5 Q26,28 28,36 Z" fill="#d6d6d6"/></g></g></svg>
<div class="b" style="left:459px;top:388.2px;width:68px;height:27.0px;background:#333333;border:1px solid #64686a;border-radius:5px;box-sizing:border-box;"></div>
<div class="t" style="left:471.4px;top:396.51px;font-size:11.8px;line-height:11.8px;color:#f4f4f4;font-weight:bold;font-style:normal;letter-spacing:-0.2px;">PUBLIC</div>
<div class="b" style="left:122px;top:437.1px;width:254px;height:28px;overflow:hidden;"><div class="t" style="left:0px;top:6.71px;font-size:15.7px;line-height:15.7px;color:#f2f2f2;font-weight:normal;font-style:normal;">Autogenerated</div></div>
<div class="t" style="left:122px;top:467.03px;font-size:14.5px;line-height:14.5px;color:#7d8589;font-weight:normal;font-style:italic;-webkit-text-stroke:0;">updated 10 minutes ago</div>
<svg class="b" style="left:403px;top:444.1px;" width="36" height="36" viewBox="0 0 36 36"><circle cx="18" cy="18" r="18" fill="#fff"/><g transform="scale(1.0)"><circle cx="18.4" cy="17.6" r="13.2" fill="none" stroke="#222" stroke-width="0.8"/><ellipse cx="14.8" cy="15.5" rx="1.4" ry="1.9" fill="#222"/><ellipse cx="21.8" cy="15.5" rx="1.4" ry="1.9" fill="#222"/><path d="M10.5,21.5 Q18,23.5 25.5,20.5" fill="none" stroke="#222" stroke-width="0.8"/><path d="M13,12 Q14.5,11.2 16,12.2 M20.5,12 Q22,11 23.5,11.8" fill="none" stroke="#222" stroke-width="0.7"/><path d="M18.3,30.8 V36" stroke="#222" stroke-width="0.8"/><path d="M14,5.5 Q18,2.8 22.5,4.5 M16,4.5 Q19,3.5 21,5.8" fill="none" stroke="#222" stroke-width="0.6"/></g></svg>
<div class="b" style="left:459px;top:448.8px;width:68px;height:27.0px;background:#333333;border:1px solid #64686a;border-radius:5px;box-sizing:border-box;"></div>
<div class="t" style="left:471.4px;top:457.11px;font-size:11.8px;line-height:11.8px;color:#f4f4f4;font-weight:bold;font-style:normal;letter-spacing:-0.2px;">PUBLIC</div>
<div class="b" style="left:122px;top:497.7px;width:254px;height:28px;overflow:hidden;"><div class="t" style="left:0px;top:6.71px;font-size:15.7px;line-height:15.7px;color:#f2f2f2;font-weight:normal;font-style:normal;">Autogenerated</div></div>
<div class="t" style="left:122px;top:527.63px;font-size:14.5px;line-height:14.5px;color:#7d8589;font-weight:normal;font-style:italic;-webkit-text-stroke:0;">updated an hour ago</div>
<svg class="b" style="left:403px;top:504.70000000000005px;" width="36" height="36" viewBox="0 0 36 36"><circle cx="18" cy="18" r="18" fill="#fff"/><g transform="scale(1.0)"><circle cx="18.4" cy="17.6" r="13.2" fill="none" stroke="#222" stroke-width="0.8"/><ellipse cx="14.8" cy="15.5" rx="1.4" ry="1.9" fill="#222"/><ellipse cx="21.8" cy="15.5" rx="1.4" ry="1.9" fill="#222"/><path d="M10.5,21.5 Q18,23.5 25.5,20.5" fill="none" stroke="#222" stroke-width="0.8"/><path d="M13,12 Q14.5,11.2 16,12.2 M20.5,12 Q22,11 23.5,11.8" fill="none" stroke="#222" stroke-width="0.7"/><path d="M18.3,30.8 V36" stroke="#222" stroke-width="0.8"/><path d="M14,5.5 Q18,2.8 22.5,4.5 M16,4.5 Q19,3.5 21,5.8" fill="none" stroke="#222" stroke-width="0.6"/></g></svg>
<div class="b" style="left:459px;top:509.40000000000003px;width:68px;height:27.000000000000057px;background:#333333;border:1px solid #64686a;border-radius:5px;box-sizing:border-box;"></div>
<div class="t" style="left:471.4px;top:517.71px;font-size:11.8px;line-height:11.8px;color:#f4f4f4;font-weight:bold;font-style:normal;letter-spacing:-0.2px;">PUBLIC</div>
<div class="b" style="left:122px;top:558.3px;width:254px;height:28px;overflow:hidden;"><div class="t" style="left:0px;top:6.71px;font-size:15.7px;line-height:15.7px;color:#f2f2f2;font-weight:normal;font-style:normal;">nginx</div></div>
<div class="t" style="left:122px;top:588.23px;font-size:14.5px;line-height:14.5px;color:#7d8589;font-weight:normal;font-style:italic;-webkit-text-stroke:0;">updated 2 hours ago</div>
<svg class="b" style="left:403px;top:565.3px;" width="36" height="36" viewBox="0 0 36 36"><circle cx="18" cy="18" r="18" fill="#7c7c7c"/><g transform="scale(1.0)"><circle cx="18" cy="14" r="4.3" fill="#2b2b2b"/><path d="M9.5,26 Q9.5,20.5 18,20.5 Q26.5,20.5 26.5,26 V27 H9.5 Z" fill="#2b2b2b"/></g></svg>
<div class="b" style="left:459px;top:570.0px;width:68px;height:27.0px;background:#333333;border:1px solid #64686a;border-radius:5px;box-sizing:border-box;"></div>
<div class="t" style="left:471.4px;top:578.31px;font-size:11.8px;line-height:11.8px;color:#f4f4f4;font-weight:bold;font-style:normal;letter-spacing:-0.2px;">PUBLIC</div>
<div class="b" style="left:122px;top:618.9px;width:254px;height:28px;overflow:hidden;"><div class="t" style="left:0px;top:6.71px;font-size:15.7px;line-height:15.7px;color:#f2f2f2;font-weight:normal;font-style:normal;">Santhosh-Prom</div></div>
<div class="t" style="left:122px;top:648.83px;font-size:14.5px;line-height:14.5px;color:#7d8589;font-weight:normal;font-style:italic;-webkit-text-stroke:0;">updated 2 hours ago</div>
<svg class="b" style="left:403px;top:625.9000000000001px;" width="36" height="36" viewBox="0 0 36 36"><circle cx="18" cy="18" r="18" fill="#7c7c7c"/><g transform="scale(1.0)"><circle cx="18" cy="14" r="4.3" fill="#2b2b2b"/><path d="M9.5,26 Q9.5,20.5 18,20.5 Q26.5,20.5 26.5,26 V27 H9.5 Z" fill="#2b2b2b"/></g></svg>
<div class="b" style="left:459px;top:630.6000000000001px;width:68px;height:27.0px;background:#333333;border:1px solid #64686a;border-radius:5px;box-sizing:border-box;"></div>
<div class="t" style="left:471.4px;top:638.91px;font-size:11.8px;line-height:11.8px;color:#f4f4f4;font-weight:bold;font-style:normal;letter-spacing:-0.2px;">PUBLIC</div>
<div class="b" style="left:122px;top:679.5px;width:254px;height:28px;overflow:hidden;"><div class="t" style="left:0px;top:6.71px;font-size:15.7px;line-height:15.7px;color:#f2f2f2;font-weight:normal;font-style:normal;">K8 Statefulset demonstration with mongodb</div></div>
<div class="t" style="left:122px;top:709.43px;font-size:14.5px;line-height:14.5px;color:#7d8589;font-weight:normal;font-style:italic;-webkit-text-stroke:0;">updated 2 hours ago</div>
<svg class="b" style="left:403px;top:686.5px;" width="36" height="36" viewBox="0 0 36 36"><defs><clipPath id="cr7"><circle cx="18" cy="18" r="18"/></clipPath></defs><g clip-path="url(#cr7)"><rect width="36" height="36" fill="#2f4563"/><circle cx="5.3999999999999995" cy="28.8" r="10.799999999999999" fill="#4b6f9a"/><g transform="scale(1.0)"><path d="M8,14 Q9,4 18,4 Q27,4 28,14 L27,12 Q18,8 9,12 Z" fill="#1d1d22"/><ellipse cx="18" cy="17" rx="8" ry="9.5" fill="#b27a62"/><path d="M11,20 Q18,31 25,20 L25,24 Q18,31 11,24 Z" fill="#2c2020"/><path d="M2,36 Q5,27 14,27 L22,27 Q31,27 34,36 Z" fill="#dfe6ee"/></g></g></svg>
<div class="b" style="left:459px;top:691.2px;width:68px;height:27.0px;background:#333333;border:1px solid #64686a;border-radius:5px;box-sizing:border-box;"></div>
<div class="t" style="left:471.4px;top:699.51px;font-size:11.8px;line-height:11.8px;color:#f4f4f4;font-weight:bold;font-style:normal;letter-spacing:-0.2px;">PUBLIC</div>
<div class="b" style="left:122px;top:740.1px;width:254px;height:28px;overflow:hidden;"><div class="t" style="left:0px;top:6.71px;font-size:15.7px;line-height:15.7px;color:#f2f2f2;font-weight:normal;font-style:normal;">Autogenerated</div></div>
<div class="t" style="left:122px;top:770.03px;font-size:14.5px;line-height:14.5px;color:#7d8589;font-weight:normal;font-style:italic;-webkit-text-stroke:0;">updated 2 hours ago</div>
<svg class="b" style="left:403px;top:747.1px;" width="36" height="36" viewBox="0 0 36 36"><circle cx="18" cy="18" r="18" fill="#fff"/><g transform="scale(1.0)"><circle cx="18.4" cy="17.6" r="13.2" fill="none" stroke="#222" stroke-width="0.8"/><ellipse cx="14.8" cy="15.5" rx="1.4" ry="1.9" fill="#222"/><ellipse cx="21.8" cy="15.5" rx="1.4" ry="1.9" fill="#222"/><path d="M10.5,21.5 Q18,23.5 25.5,20.5" fill="none" stroke="#222" stroke-width="0.8"/><path d="M13,12 Q14.5,11.2 16,12.2 M20.5,12 Q22,11 23.5,11.8" fill="none" stroke="#222" stroke-width="0.7"/><path d="M18.3,30.8 V36" stroke="#222" stroke-width="0.8"/><path d="M14,5.5 Q18,2.8 22.5,4.5 M16,4.5 Q19,3.5 21,5.8" fill="none" stroke="#222" stroke-width="0.6"/></g></svg>
<div class="b" style="left:459px;top:751.8000000000001px;width:68px;height:27.0px;background:#333333;border:1px solid #64686a;border-radius:5px;box-sizing:border-box;"></div>
<div class="t" style="left:471.4px;top:760.11px;font-size:11.8px;line-height:11.8px;color:#f4f4f4;font-weight:bold;font-style:normal;letter-spacing:-0.2px;">PUBLIC</div>
<div class="b" style="left:122px;top:800.7px;width:254px;height:28px;overflow:hidden;"><div class="t" style="left:0px;top:6.71px;font-size:15.7px;line-height:15.7px;color:#f2f2f2;font-weight:normal;font-style:normal;">Autogenerated</div></div>
<div class="t" style="left:122px;top:830.63px;font-size:14.5px;line-height:14.5px;color:#7d8589;font-weight:normal;font-style:italic;-webkit-text-stroke:0;">updated 2 hours ago</div>
<svg class="b" style="left:403px;top:807.7px;" width="36" height="36" viewBox="0 0 36 36"><circle cx="18" cy="18" r="18" fill="#fff"/><g transform="scale(1.0)"><circle cx="18.4" cy="17.6" r="13.2" fill="none" stroke="#222" stroke-width="0.8"/><ellipse cx="14.8" cy="15.5" rx="1.4" ry="1.9" fill="#222"/><ellipse cx="21.8" cy="15.5" rx="1.4" ry="1.9" fill="#222"/><path d="M10.5,21.5 Q18,23.5 25.5,20.5" fill="none" stroke="#222" stroke-width="0.8"/><path d="M13,12 Q14.5,11.2 16,12.2 M20.5,12 Q22,11 23.5,11.8" fill="none" stroke="#222" stroke-width="0.7"/><path d="M18.3,30.8 V36" stroke="#222" stroke-width="0.8"/><path d="M14,5.5 Q18,2.8 22.5,4.5 M16,4.5 Q19,3.5 21,5.8" fill="none" stroke="#222" stroke-width="0.6"/></g></svg>
<div class="b" style="left:459px;top:812.4000000000001px;width:68px;height:27.0px;background:#333333;border:1px solid #64686a;border-radius:5px;box-sizing:border-box;"></div>
<div class="t" style="left:471.4px;top:820.71px;font-size:11.8px;line-height:11.8px;color:#f4f4f4;font-weight:bold;font-style:normal;letter-spacing:-0.2px;">PUBLIC</div>
<div class="b" style="left:122px;top:867.3px;width:6px;height:1.5px;background:#ddd;"></div>
<div class="b" style="left:416px;top:868.8px;width:10px;height:1.8000000000000682px;background:#e8e8e8;border-radius:5px 5px 0 0;"></div>
<svg class="b" style="left:114px;top:420px;" width="22" height="11.5" viewBox="0 0 22 11.5"><defs><radialGradient id="tipg" cx="0.4" cy="0.7" r="0.7"><stop offset="0" stop-color="#6f84a8"/><stop offset="1" stop-color="#2c3440"/></radialGradient></defs><path d="M0.5,11.5 A10.5,10.5 0 0 1 21.5,11.5 Z" fill="url(#tipg)"/><path d="M11.5,4.5 L13,6 L12.5,8 L14,10 L13.5,11.5 L10,11.5 L11,8.5 Z" fill="#0d1220"/><path d="M10,9 L11.5,8.5 L11,11 L9.5,11 Z" fill="#e8eaf0"/></svg>
<div class="b" style="left:547px;top:251px;width:9px;height:302px;background:#777777;"></div>
<div class="b" style="left:547px;top:553px;width:9px;height:317px;background:#3e3e3e;"></div>
<svg class="b" style="left:0px;top:100px;" width="76" height="280" viewBox="0 100 76 280"><rect x="29.6" y="111.6" width="7.5" height="10.5" fill="#cdd0d2"/><rect x="29.6" y="123.3" width="7.5" height="5.2" fill="#cdd0d2"/><rect x="38.8" y="111.6" width="8.1" height="6.4" fill="#cdd0d2"/><rect x="38.8" y="119.3" width="8.1" height="9.2" fill="#cdd0d2"/><polygon points="42.56,163.81 42.24,165.41 39.86,165.97 39.17,167.00 39.57,169.42 38.21,170.32 36.13,169.03 34.92,169.27 33.49,171.26 31.89,170.94 31.33,168.56 30.30,167.87 27.88,168.27 26.98,166.91 28.27,164.83 28.03,163.62 26.04,162.19 26.36,160.59 28.74,160.03 29.43,159.00 29.03,156.58 30.39,155.68 32.47,156.97 33.68,156.73 35.11,154.74 36.71,155.06 37.27,157.44 38.30,158.13 40.72,157.73 41.62,159.09 40.33,161.17 40.57,162.38" fill="#cdd0d2" stroke="#cdd0d2" stroke-width="0.5" stroke-linejoin="round"/><circle cx="34.3" cy="163" r="2.6" fill="#232e33"/><polygon points="50.36,158.20 50.05,159.36 48.42,159.61 47.81,160.22 47.56,161.85 46.40,162.16 45.37,160.87 44.54,160.65 43.00,161.25 42.15,160.40 42.75,158.86 42.53,158.03 41.24,157.00 41.55,155.84 43.18,155.59 43.79,154.98 44.04,153.35 45.20,153.04 46.23,154.33 47.06,154.55 48.60,153.95 49.45,154.80 48.85,156.34 49.07,157.17" fill="#cdd0d2" stroke="#cdd0d2" stroke-width="0.5" stroke-linejoin="round"/><circle cx="45.8" cy="157.6" r="1.4" fill="#232e33"/><polygon points="50.36,169.10 50.05,170.26 48.42,170.51 47.81,171.12 47.56,172.75 46.40,173.06 45.37,171.77 44.54,171.55 43.00,172.15 42.15,171.30 42.75,169.76 42.53,168.93 41.24,167.90 41.55,166.74 43.18,166.49 43.79,165.88 44.04,164.25 45.20,163.94 46.23,165.23 47.06,165.45 48.60,164.85 49.45,165.70 48.85,167.24 49.07,168.07" fill="#cdd0d2" stroke="#cdd0d2" stroke-width="0.5" stroke-linejoin="round"/><circle cx="45.8" cy="168.5" r="1.4" fill="#232e33"/><line x1="32" y1="199" x2="46" y2="213" stroke="#cdd0d2" stroke-width="2.6"/><line x1="46" y1="198.5" x2="32" y2="212.5" stroke="#cdd0d2" stroke-width="2.6"/><path d="M30.5,196 L33.5,196.5 L34,200 L30.8,200.8 L29,198 Z" fill="#cdd0d2"/><circle cx="45.8" cy="199" r="3" fill="none" stroke="#cdd0d2" stroke-width="1.8"/><circle cx="32" cy="212.3" r="3" fill="none" stroke="#cdd0d2" stroke-width="1.8"/><path d="M48.5,215 L45,215 L44.5,211.5 L47.5,210.5 Z" fill="#cdd0d2"/><path d="M28,243.5 Q38,236 49,241" fill="none" stroke="#cdd0d2" stroke-width="1.2"/><path d="M44,239 L51,242.5 L47,244 Z" fill="#cdd0d2"/><line x1="36.3" y1="249.5" x2="40.7" y2="242.2" stroke="#cdd0d2" stroke-width="1.3"/><path d="M36.5,282 A9.5,9.5 0 1 0 46,293.5 L42,292.5 A5,5 0 0 1 36.8,286 Z" fill="#cdd0d2"/><path d="M41,279.8 A10,10 0 0 1 50.3,289.6 L44.5,289.5 Q41,289 41,285.5 Z" fill="#cdd0d2"/><defs><clipPath id="pieclip"><path d="M36.5,282 A9.5,9.5 0 1 0 46,293.5 L42,292.5 A5,5 0 0 1 36.8,286 Z M41,279.8 A10,10 0 0 1 50.3,289.6 L44.5,289.5 Q41,289 41,285.5 Z"/></clipPath></defs><g clip-path="url(#pieclip)"><line x1="6.799999999999997" y1="300" x2="18.799999999999997" y2="279" stroke="#8e9598" stroke-width="0.5"/><line x1="6.799999999999997" y1="279" x2="18.799999999999997" y2="300" stroke="#8e9598" stroke-width="0.5"/><line x1="10.0" y1="300" x2="22.0" y2="279" stroke="#8e9598" stroke-width="0.5"/><line x1="10.0" y1="279" x2="22.0" y2="300" stroke="#8e9598" stroke-width="0.5"/><line x1="13.2" y1="300" x2="25.2" y2="279" stroke="#8e9598" stroke-width="0.5"/><line x1="13.2" y1="279" x2="25.2" y2="300" stroke="#8e9598" stroke-width="0.5"/><line x1="16.4" y1="300" x2="28.4" y2="279" stroke="#8e9598" stroke-width="0.5"/><line x1="16.4" y1="279" x2="28.4" y2="300" stroke="#8e9598" stroke-width="0.5"/><line x1="19.6" y1="300" x2="31.6" y2="279" stroke="#8e9598" stroke-width="0.5"/><line x1="19.6" y1="279" x2="31.6" y2="300" stroke="#8e9598" stroke-width="0.5"/><line x1="22.8" y1="300" x2="34.8" y2="279" stroke="#8e9598" stroke-width="0.5"/><line x1="22.8" y1="279" x2="34.8" y2="300" stroke="#8e9598" stroke-width="0.5"/><line x1="26.0" y1="300" x2="38.0" y2="279" stroke="#8e9598" stroke-width="0.5"/><line x1="26.0" y1="279" x2="38.0" y2="300" stroke="#8e9598" stroke-width="0.5"/><line x1="29.2" y1="300" x2="41.2" y2="279" stroke="#8e9598" stroke-width="0.5"/><line x1="29.2" y1="279" x2="41.2" y2="300" stroke="#8e9598" stroke-width="0.5"/><line x1="32.4" y1="300" x2="44.4" y2="279" stroke="#8e9598" stroke-width="0.5"/><line x1="32.4" y1="279" x2="44.4" y2="300" stroke="#8e9598" stroke-width="0.5"/><line x1="35.6" y1="300" x2="47.6" y2="279" stroke="#8e9598" stroke-width="0.5"/><line x1="35.6" y1="279" x2="47.6" y2="300" stroke="#8e9598" stroke-width="0.5"/><line x1="38.8" y1="300" x2="50.8" y2="279" stroke="#8e9598" stroke-width="0.5"/><line x1="38.8" y1="279" x2="50.8" y2="300" stroke="#8e9598" stroke-width="0.5"/><line x1="42.0" y1="300" x2="54.0" y2="279" stroke="#8e9598" stroke-width="0.5"/><line x1="42.0" y1="279" x2="54.0" y2="300" stroke="#8e9598" stroke-width="0.5"/><line x1="45.2" y1="300" x2="57.2" y2="279" stroke="#8e9598" stroke-width="0.5"/><line x1="45.2" y1="279" x2="57.2" y2="300" stroke="#8e9598" stroke-width="0.5"/></g><polygon points="38.3,353.1 38.30,342.50 47.48,347.80" fill="#f2f2f2" stroke="#232e33" stroke-width="0.9"/><polygon points="38.3,353.1 47.48,347.80 47.48,358.40" fill="#c4c7c9" stroke="#232e33" stroke-width="0.9"/><polygon points="38.3,353.1 47.48,358.40 38.30,363.70" fill="#f2f2f2" stroke="#232e33" stroke-width="0.9"/><polygon points="38.3,353.1 38.30,363.70 29.12,358.40" fill="#c4c7c9" stroke="#232e33" stroke-width="0.9"/><polygon points="38.3,353.1 29.12,358.40 29.12,347.80" fill="#f2f2f2" stroke="#232e33" stroke-width="0.9"/><polygon points="38.3,353.1 29.12,347.80 38.30,342.50" fill="#c4c7c9" stroke="#232e33" stroke-width="0.9"/></svg>
<div class="b" style="left:0px;top:384px;width:76px;height:1px;background:#3a464b;"></div>
<div class="b" style="left:55px;top:721px;width:21px;height:50px;background:#4a555b;border-radius:7px 0 0 7px;"></div>
<svg class="b" style="left:55px;top:721px;" width="21" height="50" viewBox="0 0 21 50"><path d="M6.5,17 L14,25 L6.5,33" fill="none" stroke="#fff" stroke-width="2.3"/></svg>
<svg class="b" style="left:25px;top:796px;" width="24" height="24" viewBox="0 0 24 24"><circle cx="11.3" cy="11.5" r="9.3" fill="#c5c9cb"/><path d="M8.3,9.2 Q8.3,5.8 11.4,5.8 Q14.5,5.8 14.5,8.8 Q14.5,10.5 12.5,11.5 Q11.3,12.2 11.3,13.8" fill="none" stroke="#232e33" stroke-width="2"/><circle cx="11.3" cy="16.6" r="1.2" fill="#232e33"/></svg>
<div class="t" style="left:19.3px;top:843.18px;font-size:11.6px;line-height:11.6px;color:#e8e8e8;font-weight:normal;font-style:normal;">v0.8.11</div>
<svg class="b" style="left:560px;top:120px;" width="80" height="80" viewBox="560 120 80 80"><circle cx="599.5" cy="161" r="28.4" fill="#2e2e2a"/><line x1="599.5" y1="161" x2="605.51" y2="163.49" stroke="#f0f0f0" stroke-width="1.6"/><circle cx="605.97" cy="163.68" r="2" fill="#fff"/><line x1="599.5" y1="161" x2="601.99" y2="167.01" stroke="#f0f0f0" stroke-width="1.6"/><circle cx="602.18" cy="167.47" r="2" fill="#fff"/><line x1="599.5" y1="161" x2="597.01" y2="167.01" stroke="#f0f0f0" stroke-width="1.6"/><circle cx="596.82" cy="167.47" r="2" fill="#fff"/><line x1="599.5" y1="161" x2="593.49" y2="163.49" stroke="#f0f0f0" stroke-width="1.6"/><circle cx="593.03" cy="163.68" r="2" fill="#fff"/><line x1="599.5" y1="161" x2="593.49" y2="158.51" stroke="#f0f0f0" stroke-width="1.6"/><circle cx="593.03" cy="158.32" r="2" fill="#fff"/><line x1="599.5" y1="161" x2="597.01" y2="154.99" stroke="#f0f0f0" stroke-width="1.6"/><circle cx="596.82" cy="154.53" r="2" fill="#fff"/><line x1="599.5" y1="161" x2="601.99" y2="154.99" stroke="#f0f0f0" stroke-width="1.6"/><circle cx="602.18" cy="154.53" r="2" fill="#fff"/><line x1="599.5" y1="161" x2="605.51" y2="158.51" stroke="#f0f0f0" stroke-width="1.6"/><circle cx="605.97" cy="158.32" r="2" fill="#fff"/><circle cx="599.5" cy="161" r="3" fill="#bdbdbd"/></svg>
<svg class="b" style="left:1250px;top:150px;" width="34" height="34" viewBox="1250 150 34 34"><path d="M1258.5,176 L1256.7,175 L1257.5,171.5 L1272.5,156.5 L1277.5,161.5 L1262.5,176.5 Z" fill="#f2f2f2"/><path d="M1271,158 L1276,163" stroke="#121212" stroke-width="1.2"/></svg>
<div class="t" style="left:1290.3px;top:157.43px;font-size:14.5px;line-height:14.5px;color:#f2f2f2;font-weight:normal;font-style:normal;">New</div>
<svg class="b" style="left:1340px;top:150px;" width="34" height="32" viewBox="1340 150 34 32"><path d="M1348,155 H1362.5 L1367,159.5 V173.5 Q1367,176 1364.5,176 H1348.3 Q1345.8,176 1345.8,173.5 V157.5 Q1345.8,155 1348,155 Z" fill="#f2f2f2"/><rect x="1349" y="157.8" width="13" height="4.6" rx="1" fill="#121212"/><circle cx="1356.3" cy="169.5" r="3.2" fill="#121212"/></svg>
<div class="t" style="left:1379.4px;top:157.26px;font-size:14.7px;line-height:14.7px;color:#f2f2f2;font-weight:normal;font-style:normal;">Save As</div>
<svg class="b" style="left:1455px;top:150px;" width="32" height="32" viewBox="1455 150 32 32"><path d="M1460.5,154 H1480 Q1481.7,154 1481.7,155.7 V176.4 L1477.5,172.5 H1460.5 Q1458.8,172.5 1458.8,170.8 V155.7 Q1458.8,154 1460.5,154 Z" fill="#f2f2f2"/><rect x="1462.5" y="158.5" width="15.5" height="1.9" fill="#121212"/><rect x="1462.5" y="162.2" width="15.5" height="1.9" fill="#121212"/><rect x="1462.5" y="165.9" width="15.5" height="1.9" fill="#121212"/></svg>
<div class="t" style="left:1493.4px;top:156.49px;font-size:15.6px;line-height:15.6px;color:#f2f2f2;font-weight:normal;font-style:normal;">Comments</div>
<div class="b" style="left:1588px;top:143px;width:116px;height:45px;background:transparent;border:1px solid #8a8a8a;border-radius:7px;box-sizing:border-box;"></div>
<div class="b" style="left:1666.3px;top:144px;width:2.0px;height:43px;background:#2b3a44;"></div>
<div class="t" style="left:1598.6px;top:156.88px;font-size:18.1px;line-height:18.1px;color:#f4f4f4;font-weight:normal;font-style:normal;">Actions</div>
<svg class="b" style="left:1676px;top:158px;" width="20" height="14" viewBox="0 0 20 14"><path d="M5,4 H14.7 L9.85,10.6 Z" fill="#f4f4f4"/></svg>
<div class="b" style="left:1713px;top:143px;width:125px;height:45px;background:#0fb09f;border-radius:8px;"></div>
<div class="b" style="left:1786.5px;top:143px;width:2.0px;height:45px;background:#b8efe6;"></div>
<div class="t" style="left:1731.4px;top:157.81px;font-size:14.4px;line-height:14.4px;color:#e3faf6;font-weight:normal;font-style:normal;">Share</div>
<svg class="b" style="left:1795px;top:148px;" width="36" height="34" viewBox="0 0 36 34"><g transform="translate(6.5,5.2) scale(1.0)" fill="none" stroke="#dcfaf5" stroke-width="2.1" stroke-linecap="round" stroke-linejoin="round"><path d="M10 13a5 5 0 0 0 7.54.54l3-3a5 5 0 0 0-7.07-7.07l-1.72 1.71"/><path d="M14 11a5 5 0 0 0-7.54-.54l-3 3a5 5 0 0 0 7.07 7.07l1.71-1.71"/></g></svg>
<svg class="b" style="left:557px;top:113px;" width="1299" height="762" viewBox="557 113 1299 762"><rect x="615.8" y="248.7" width="180.7" height="177.6" rx="12" fill="#1f3e7e" stroke="#3a73dc" stroke-width="2.8"/><circle cx="661.7" cy="276" r="20" fill="#3a73dc"/><rect x="647.95" y="266.50" width="27.5" height="19" fill="#fff"/><rect x="653.95" y="270.50" width="1.5" height="11" fill="#2d5fb8"/><rect x="659.15" y="270.50" width="1.5" height="11" fill="#3b4a6a"/><rect x="664.35" y="270.50" width="1.5" height="11" fill="#2d73d8"/><rect x="669.55" y="270.50" width="1.5" height="11" fill="#3b4a6a"/><rect x="624" y="302.7" width="74.50" height="11.90" rx="2" fill="#a9b2c2"/><text x="661.25" y="311.98" font-family="Liberation Sans" font-size="9.6" fill="#1c1c22" text-anchor="middle" textLength="70.5" lengthAdjust="spacingAndGlyphs">spec.containers.0</text><circle cx="764" cy="276" r="20" fill="#3a73dc"/><rect x="750.25" y="266.50" width="27.5" height="19" fill="#fff"/><rect x="756.25" y="270.50" width="1.5" height="11" fill="#2d5fb8"/><rect x="761.45" y="270.50" width="1.5" height="11" fill="#3b4a6a"/><rect x="766.65" y="270.50" width="1.5" height="11" fill="#2d73d8"/><rect x="771.85" y="270.50" width="1.5" height="11" fill="#3b4a6a"/><rect x="740.6" y="302.7" width="46.40" height="11.90" rx="2" fill="#a9b2c2"/><text x="763.80" y="311.98" font-family="Liberation Sans" font-size="9.6" fill="#1c1c22" text-anchor="middle" textLength="42.4" lengthAdjust="spacingAndGlyphs">wordpress</text><circle cx="661.7" cy="378.7" r="20" fill="#3a73dc"/><rect x="647.95" y="369.20" width="27.5" height="19" fill="#fff"/><rect x="653.95" y="373.20" width="1.5" height="11" fill="#2d5fb8"/><rect x="659.15" y="373.20" width="1.5" height="11" fill="#3b4a6a"/><rect x="664.35" y="373.20" width="1.5" height="11" fill="#2d73d8"/><rect x="669.55" y="373.20" width="1.5" height="11" fill="#3b4a6a"/><rect x="625.6" y="404.5" width="72.00" height="13.00" rx="2" fill="#a9b2c2"/><text x="661.60" y="414.64" font-family="Liberation Sans" font-size="9.6" fill="#1c1c22" text-anchor="middle" textLength="68.0" lengthAdjust="spacingAndGlyphs">spec.containers.1</text><circle cx="614.8" cy="406.2" r="7" fill="#3a73dc"/><path d="M611.0,409.0 h7.6 v-2 h-1.6 v-2.2 h-1.5 v-1.6 h-1.5 v1.6 h-1.5 v2.2 h-1.5 z" fill="#fff"/><line x1="614.8" y1="413" x2="614.8" y2="417" stroke="#3a73dc" stroke-width="1.5"/><circle cx="614.8" cy="423.7" r="7.3" fill="#d5390f"/><text x="614.8" y="426.3" font-family="Liberation Sans" font-weight="bold" font-size="7" fill="#fff" text-anchor="middle">2</text><rect x="686" y="432.5" width="39.60" height="12.70" rx="2" fill="#9e9e9e"/><text x="705.80" y="442.41" font-family="Liberation Sans" font-size="10" fill="#1c1c22" text-anchor="middle" textLength="35.6" lengthAdjust="spacingAndGlyphs">pod-skd</text><rect x="861.2" y="268.8" width="64" height="75.3" rx="9" fill="#1f3e7e" stroke="#3a73dc" stroke-width="2.6"/><circle cx="893.1" cy="296.3" r="20" fill="#3a73dc"/><rect x="879.35" y="286.80" width="27.5" height="19" fill="#fff"/><rect x="885.35" y="290.80" width="1.5" height="11" fill="#2d5fb8"/><rect x="890.55" y="290.80" width="1.5" height="11" fill="#3b4a6a"/><rect x="895.75" y="290.80" width="1.5" height="11" fill="#2d73d8"/><rect x="900.95" y="290.80" width="1.5" height="11" fill="#3b4a6a"/><rect x="869.9" y="321.8" width="46.10" height="13.20" rx="2" fill="#a9b2c2"/><text x="892.95" y="332.10" font-family="Liberation Sans" font-size="9.6" fill="#1c1c22" text-anchor="middle" textLength="42.1" lengthAdjust="spacingAndGlyphs">wordpress</text><circle cx="860" cy="324.5" r="7" fill="#3a73dc"/><path d="M856.2,327.3 h7.6 v-2 h-1.6 v-2.2 h-1.5 v-1.6 h-1.5 v1.6 h-1.5 v2.2 h-1.5 z" fill="#fff"/><rect x="873.8" y="350" width="38.20" height="13.10" rx="2" fill="#9e9e9e"/><text x="892.90" y="360.22" font-family="Liberation Sans" font-size="10" fill="#1c1c22" text-anchor="middle" textLength="34.2" lengthAdjust="spacingAndGlyphs">pod-rcc</text><rect x="1383.3" y="416.3" width="414.5" height="301" rx="13" fill="#1f3f7e" stroke="#3a73dc" stroke-width="2.6"/><rect x="1394.8" y="424.8" width="213.4" height="177.1" rx="12" fill="#2a55ae" stroke="#3c70da" stroke-width="2"/><circle cx="1450.2" cy="452.1" r="20" fill="#3a73dc"/><rect x="1436.45" y="442.60" width="27.5" height="19" fill="#fff"/><rect x="1442.45" y="446.60" width="1.5" height="11" fill="#2d5fb8"/><rect x="1447.65" y="446.60" width="1.5" height="11" fill="#3b4a6a"/><rect x="1452.85" y="446.60" width="1.5" height="11" fill="#2d73d8"/><rect x="1458.05" y="446.60" width="1.5" height="11" fill="#3b4a6a"/><circle cx="1552.4" cy="452.1" r="20" fill="#3a73dc"/><rect x="1538.65" y="442.60" width="27.5" height="19" fill="#fff"/><rect x="1544.65" y="446.60" width="1.5" height="11" fill="#2d5fb8"/><rect x="1549.85" y="446.60" width="1.5" height="11" fill="#3b4a6a"/><rect x="1555.05" y="446.60" width="1.5" height="11" fill="#2d73d8"/><rect x="1560.25" y="446.60" width="1.5" height="11" fill="#3b4a6a"/><circle cx="1450.2" cy="554.8" r="20" fill="#3a73dc"/><rect x="1436.45" y="545.30" width="27.5" height="19" fill="#fff"/><rect x="1442.45" y="549.30" width="1.5" height="11" fill="#2d5fb8"/><rect x="1447.65" y="549.30" width="1.5" height="11" fill="#3b4a6a"/><rect x="1452.85" y="549.30" width="1.5" height="11" fill="#2d73d8"/><rect x="1458.05" y="549.30" width="1.5" height="11" fill="#3b4a6a"/><circle cx="1552.4" cy="554.8" r="20" fill="#3a73dc"/><rect x="1538.65" y="545.30" width="27.5" height="19" fill="#fff"/><rect x="1544.65" y="549.30" width="1.5" height="11" fill="#2d5fb8"/><rect x="1549.85" y="549.30" width="1.5" height="11" fill="#3b4a6a"/><rect x="1555.05" y="549.30" width="1.5" height="11" fill="#2d73d8"/><rect x="1560.25" y="549.30" width="1.5" height="11" fill="#3b4a6a"/><rect x="1403.8" y="478.1" width="92.70" height="13.30" rx="2" fill="#a9b2c2"/><text x="1450.15" y="488.47" font-family="Liberation Sans" font-size="9.6" fill="#1c1c22" text-anchor="middle" textLength="88.7" lengthAdjust="spacingAndGlyphs">spec.template.spec.s...</text><rect x="1506" y="478.1" width="93.20" height="13.30" rx="2" fill="#a9b2c2"/><text x="1552.60" y="488.47" font-family="Liberation Sans" font-size="9.6" fill="#1c1c22" text-anchor="middle" textLength="89.2" lengthAdjust="spacingAndGlyphs">spec.template.spec.s...</text><rect x="1403.8" y="580.4" width="92.70" height="13.00" rx="2" fill="#a9b2c2"/><text x="1450.15" y="590.54" font-family="Liberation Sans" font-size="9.6" fill="#1c1c22" text-anchor="middle" textLength="88.7" lengthAdjust="spacingAndGlyphs">spec.template.spec.s...</text><rect x="1506" y="580.4" width="93.20" height="13.00" rx="2" fill="#a9b2c2"/><text x="1552.60" y="590.54" font-family="Liberation Sans" font-size="9.6" fill="#1c1c22" text-anchor="middle" textLength="89.2" lengthAdjust="spacingAndGlyphs">spec.template.spec.s...</text><circle cx="1394.3" cy="582.9" r="7" fill="#3a73dc"/><path d="M1390.5,585.6999999999999 h7.6 v-2 h-1.6 v-2.2 h-1.5 v-1.6 h-1.5 v1.6 h-1.5 v2.2 h-1.5 z" fill="#fff"/><circle cx="1394.3" cy="599.9" r="7.3" fill="#d5390f"/><text x="1394.3" y="602.5" font-family="Liberation Sans" font-weight="bold" font-size="7" fill="#fff" text-anchor="middle">3</text><rect x="1460.7" y="608.4" width="81.60" height="12.60" rx="2" fill="#a9b2c2"/><text x="1501.50" y="618.23" font-family="Liberation Sans" font-size="9.6" fill="#1c1c22" text-anchor="middle" textLength="77.6" lengthAdjust="spacingAndGlyphs">spec.template.spec</text><rect x="1659.3" y="430" width="57.8" height="57.8" rx="10" fill="#2a55ae" stroke="#3c70da" stroke-width="2.4"/><circle cx="1658.4" cy="467.7" r="6.5" fill="#3a73dc"/><path d="M1654.6000000000001,470.5 h7.6 v-2 h-1.6 v-2.2 h-1.5 v-1.6 h-1.5 v1.6 h-1.5 v2.2 h-1.5 z" fill="#fff"/><rect x="1675.7" y="494" width="25.80" height="13.00" rx="2" fill="#a9b2c2"/><text x="1688.60" y="504.14" font-family="Liberation Sans" font-size="9.6" fill="#1c1c22" text-anchor="middle" textLength="21.8" lengthAdjust="spacingAndGlyphs">spec</text><circle cx="1436.9" cy="670.4" r="20" fill="#3a73dc"/><rect x="1423.15" y="660.90" width="27.5" height="19" fill="#fff"/><rect x="1429.15" y="664.90" width="1.5" height="11" fill="#2d5fb8"/><rect x="1434.35" y="664.90" width="1.5" height="11" fill="#3b4a6a"/><rect x="1439.55" y="664.90" width="1.5" height="11" fill="#2d73d8"/><rect x="1444.75" y="664.90" width="1.5" height="11" fill="#3b4a6a"/><circle cx="1539.1" cy="670.4" r="20" fill="#3a73dc"/><rect x="1525.35" y="660.90" width="27.5" height="19" fill="#fff"/><rect x="1531.35" y="664.90" width="1.5" height="11" fill="#2d5fb8"/><rect x="1536.55" y="664.90" width="1.5" height="11" fill="#3b4a6a"/><rect x="1541.75" y="664.90" width="1.5" height="11" fill="#2d73d8"/><rect x="1546.95" y="664.90" width="1.5" height="11" fill="#3b4a6a"/><circle cx="1641.5" cy="670.4" r="20" fill="#3a73dc"/><rect x="1627.75" y="660.90" width="27.5" height="19" fill="#fff"/><rect x="1633.75" y="664.90" width="1.5" height="11" fill="#2d5fb8"/><rect x="1638.95" y="664.90" width="1.5" height="11" fill="#3b4a6a"/><rect x="1644.15" y="664.90" width="1.5" height="11" fill="#2d73d8"/><rect x="1649.35" y="664.90" width="1.5" height="11" fill="#3b4a6a"/><circle cx="1744" cy="670.4" r="20" fill="#3a73dc"/><rect x="1730.25" y="660.90" width="27.5" height="19" fill="#fff"/><rect x="1736.25" y="664.90" width="1.5" height="11" fill="#2d5fb8"/><rect x="1741.45" y="664.90" width="1.5" height="11" fill="#3b4a6a"/><rect x="1746.65" y="664.90" width="1.5" height="11" fill="#2d73d8"/><rect x="1751.85" y="664.90" width="1.5" height="11" fill="#3b4a6a"/><rect x="1392.2" y="696" width="89.60" height="12.90" rx="2" fill="#a9b2c2"/><text x="1437.00" y="706.06" font-family="Liberation Sans" font-size="9.6" fill="#1c1c22" text-anchor="middle" textLength="85.6" lengthAdjust="spacingAndGlyphs">spec.template.spec....</text><rect x="1494.2" y="696" width="89.60" height="12.90" rx="2" fill="#a9b2c2"/><text x="1539.00" y="706.06" font-family="Liberation Sans" font-size="9.6" fill="#1c1c22" text-anchor="middle" textLength="85.6" lengthAdjust="spacingAndGlyphs">spec.template.spec....</text><rect x="1618" y="696" width="46.90" height="12.90" rx="2" fill="#a9b2c2"/><text x="1641.45" y="706.06" font-family="Liberation Sans" font-size="9.6" fill="#1c1c22" text-anchor="middle" textLength="42.9" lengthAdjust="spacingAndGlyphs">wordpress</text><rect x="1698.8" y="696" width="90.10" height="12.90" rx="2" fill="#a9b2c2"/><text x="1743.85" y="706.06" font-family="Liberation Sans" font-size="9.6" fill="#1c1c22" text-anchor="middle" textLength="86.1" lengthAdjust="spacingAndGlyphs">spec.template.spec....</text><circle cx="1382.6" cy="697.9" r="7.5" fill="#3a73dc"/><path d="M1378.8,700.6999999999999 h7.6 v-2 h-1.6 v-2.2 h-1.5 v-1.6 h-1.5 v1.6 h-1.5 v2.2 h-1.5 z" fill="#fff"/><line x1="1382.6" y1="705" x2="1382.6" y2="709" stroke="#3a73dc" stroke-width="1.5"/><circle cx="1382.6" cy="715.8" r="7.5" fill="#d5390f"/><text x="1382.6" y="718.4" font-family="Liberation Sans" font-weight="bold" font-size="7" fill="#fff" text-anchor="middle">3</text><rect x="1567" y="724.3" width="47.00" height="12.60" rx="2" fill="#9e9e9e"/><text x="1590.50" y="734.13" font-family="Liberation Sans" font-size="10" fill="#1c1c22" text-anchor="middle" textLength="43.0" lengthAdjust="spacingAndGlyphs">wordpress</text><path d="M1212.5,539 Q1216.1,533 1219.7,539 L1236,575 Q1238.5,580 1233,580 H1198.5 Q1193,580 1195.5,575 Z" fill="#3a73dc"/><polygon points="1215.50,549.50 1223.32,553.27 1225.25,561.73 1219.84,568.51 1211.16,568.51 1205.75,561.73 1207.68,553.27" fill="#fff" stroke="#fff" stroke-width="1" stroke-linejoin="round"/><circle cx="1215.5" cy="559.8" r="4.6" fill="none" stroke="#3a73dc" stroke-width="1.1"/><line x1="1215.5" y1="559.8" x2="1215.50" y2="552.80" stroke="#3a73dc" stroke-width="0.9"/><line x1="1215.5" y1="559.8" x2="1220.97" y2="555.44" stroke="#3a73dc" stroke-width="0.9"/><line x1="1215.5" y1="559.8" x2="1222.32" y2="561.36" stroke="#3a73dc" stroke-width="0.9"/><line x1="1215.5" y1="559.8" x2="1218.54" y2="566.11" stroke="#3a73dc" stroke-width="0.9"/><line x1="1215.5" y1="559.8" x2="1212.46" y2="566.11" stroke="#3a73dc" stroke-width="0.9"/><line x1="1215.5" y1="559.8" x2="1208.68" y2="561.36" stroke="#3a73dc" stroke-width="0.9"/><line x1="1215.5" y1="559.8" x2="1210.03" y2="555.44" stroke="#3a73dc" stroke-width="0.9"/><line x1="1241" y1="556" x2="1377" y2="560" stroke="#c8c8c8" stroke-width="1.4" stroke-dasharray="1.6 1.2"/><path d="M1372.5,555.6 L1381.2,560 L1372.5,564.4 L1375,560 Z" fill="#b8b8b8" stroke="#c8c8c8" stroke-width="0.8" stroke-linejoin="round"/><rect x="1216" y="551.2" width="24.7" height="7.7" rx="3.5" fill="#fff"/><text x="1228.3" y="557.6" font-family="Liberation Sans" font-size="7.4" fill="#222" text-anchor="middle">80/TCP</text><rect x="1192.2" y="585" width="46.80" height="12.70" rx="2" fill="#9e9e9e"/><text x="1215.60" y="594.91" font-family="Liberation Sans" font-size="10" fill="#1c1c22" text-anchor="middle" textLength="42.8" lengthAdjust="spacingAndGlyphs">wordpress</text></svg>
<svg class="b" style="left:1088px;top:400px;" width="30" height="36" viewBox="1088 400 30 36"><path d="M1094.7,404.3 L1094.7,427.6 L1099.9,423 L1103.3,431 L1107.6,429.3 L1104.3,422.2 L1112,422.2 Z" fill="#fff" stroke="#000" stroke-width="1.2" stroke-linejoin="miter"/></svg>
<div class="b" style="left:747px;top:750px;width:918px;height:108px;background:#1e1e1e;border-radius:15px;"></div>
<div class="b" style="left:802px;top:750px;width:1.2999999999999545px;height:108px;background:#2b2e33;"></div>
<div class="b" style="left:938px;top:750px;width:1.2999999999999545px;height:108px;background:#2b2e33;"></div>
<div class="b" style="left:1282px;top:750px;width:1.2999999999999545px;height:108px;background:#2b2e33;"></div>
<div class="b" style="left:1429px;top:750px;width:1.2999999999999545px;height:108px;background:#2b2e33;"></div>
<svg class="b" style="left:740px;top:745px;" width="930" height="120" viewBox="740 745 930 120"><path d="M765,769 L784.5,776.5 L776.8,779.6 L773.8,786.8 Z" fill="#f4f5f6" stroke="#f4f5f6" stroke-width="2.6" stroke-linejoin="round"/><rect x="768.6" y="821.5" width="3.6" height="14" rx="1.8" fill="#f4f5f6"/><rect x="772.8" y="817.8" width="3.6" height="16" rx="1.8" fill="#f4f5f6"/><rect x="777" y="819.2" width="3.6" height="15" rx="1.8" fill="#f4f5f6"/><rect x="781.6" y="822.6" width="3.8" height="13" rx="1.9" fill="#f4f5f6"/><path d="M768.6,830 H785.4 V836 Q785.4,844.4 778,844.4 H773.5 Q771,844.4 769,841.5 L764,835.2 Q762.8,833.5 764.5,832.6 Q766,831.8 767.5,833.3 L768.6,834.5 Z" fill="#f4f5f6"/><path d="M772.5,823 V832 M776.7,821 V832 M781.3,823 V832" stroke="#1e1e1e" stroke-width="0.7"/><polyline points="837.5,795 837.5,790 830,790" fill="none" stroke="#dfe1e3" stroke-width="1.6"/><polyline points="845.5,795 845.5,790 853,790" fill="none" stroke="#dfe1e3" stroke-width="1.6"/><polyline points="837.5,814.5 837.5,818.7 830,818.7" fill="none" stroke="#dfe1e3" stroke-width="1.6"/><polyline points="845.5,814.5 845.5,818.7 853,818.7" fill="none" stroke="#dfe1e3" stroke-width="1.6"/><line x1="825" y1="804.4" x2="832" y2="804.4" stroke="#dfe1e3" stroke-width="1.6"/><line x1="851" y1="804.4" x2="858" y2="804.4" stroke="#dfe1e3" stroke-width="1.6"/><circle cx="827.1" cy="790" r="2.7" fill="none" stroke="#dfe1e3" stroke-width="2"/><circle cx="855.5" cy="790" r="2.7" fill="none" stroke="#dfe1e3" stroke-width="2"/><circle cx="822.3" cy="804.4" r="2.7" fill="none" stroke="#dfe1e3" stroke-width="2"/><circle cx="860.2" cy="804.4" r="2.7" fill="none" stroke="#dfe1e3" stroke-width="2"/><circle cx="827.1" cy="818.7" r="2.7" fill="none" stroke="#dfe1e3" stroke-width="2"/><circle cx="855.5" cy="818.7" r="2.7" fill="none" stroke="#dfe1e3" stroke-width="2"/><rect x="831.2" y="794.5" width="20.2" height="20.5" rx="4" fill="#f1f3f4"/><rect x="836.3" y="798.9" width="10.6" height="10.6" rx="1" fill="#242424"/><rect x="838.4" y="801" width="6.5" height="6.5" fill="#c9c9c9"/><polygon points="902.50,784.70 918.53,792.42 922.49,809.76 911.39,823.67 893.61,823.67 882.51,809.76 886.47,792.42" fill="#f1f3f4" stroke="#f1f3f4" stroke-width="3" stroke-linejoin="round"/><circle cx="902.6" cy="805.4" r="10.2" fill="none" stroke="#1e1e1e" stroke-width="2.4"/><line x1="902.60" y1="803.20" x2="902.60" y2="789.60" stroke="#1e1e1e" stroke-width="1.7" stroke-linecap="round"/><line x1="904.32" y1="804.03" x2="914.95" y2="795.55" stroke="#1e1e1e" stroke-width="1.7" stroke-linecap="round"/><line x1="904.74" y1="805.89" x2="918.00" y2="808.92" stroke="#1e1e1e" stroke-width="1.7" stroke-linecap="round"/><line x1="903.55" y1="807.38" x2="909.46" y2="819.64" stroke="#1e1e1e" stroke-width="1.7" stroke-linecap="round"/><line x1="901.65" y1="807.38" x2="895.74" y2="819.64" stroke="#1e1e1e" stroke-width="1.7" stroke-linecap="round"/><line x1="900.46" y1="805.89" x2="887.20" y2="808.92" stroke="#1e1e1e" stroke-width="1.7" stroke-linecap="round"/><line x1="900.88" y1="804.03" x2="890.25" y2="795.55" stroke="#1e1e1e" stroke-width="1.7" stroke-linecap="round"/><circle cx="902.6" cy="805.4" r="3.2" fill="none" stroke="#1e1e1e" stroke-width="1.5"/><path d="M965.7,786.5 L975,802.5 H954.5 Z" fill="#f1f3f4" stroke="#f1f3f4" stroke-width="1.4" stroke-linejoin="round"/><rect x="958.8" y="800.6" width="23.8" height="24.4" rx="5" fill="#f1f3f4" stroke="#1e1e1e" stroke-width="1.2"/><circle cx="984.3" cy="804.5" r="10.8" fill="#1e1e1e"/><circle cx="984.3" cy="804.5" r="9.4" fill="#f1f3f4"/><path d="M1022,785.7 H1055.5 Q1057.8,785.7 1057.8,788 V822.9 L1050.5,816 H1022 Q1019.7,816 1019.7,813.7 V788 Q1019.7,785.7 1022,785.7 Z" fill="#f1f3f4"/><rect x="1026" y="793" width="23" height="3.3" fill="#1e1e1e"/><rect x="1026" y="799" width="23" height="3.3" fill="#1e1e1e"/><rect x="1026" y="805" width="23" height="3.3" fill="#1e1e1e"/><rect x="1087" y="781" width="38" height="38" rx="9" fill="#f1f3f4"/><path d="M1091.5,802.5 Q1096,798 1101,803 Q1106.5,809 1112,804.5 Q1117,799.5 1120.5,803.5 V811 Q1120.5,814.5 1117,814.5 H1095 Q1091.5,814.5 1091.5,811 Z" fill="#1e1e1e"/><circle cx="1113.5" cy="791" r="3.6" fill="#1e1e1e"/><rect x="1156.5" y="785.8" width="37.6" height="37.1" rx="9" fill="#f1f3f4"/><path d="M1167.5,798.5 V795 H1183 V798.5 M1175.2,795 V813 M1170.5,813.5 H1180" fill="none" stroke="#1e1e1e" stroke-width="2"/><path d="M1226,797.8 H1249.5 V790.2 Q1249.5,787.7 1252,787.7 H1258 Q1260.5,787.7 1260.5,790.2 V819 Q1260.5,821.6 1258,821.6 H1228.5 Q1226,821.6 1226,819 Z" fill="#f1f3f4"/><rect x="1227" y="788.5" width="20.3" height="8.5" rx="3" fill="#1e1e1e" stroke="#f1f3f4" stroke-width="1.6"/><rect x="1303.7" y="785.5" width="37.4" height="37.8" rx="9" fill="#f1f3f4"/><path d="M1311,812.5 L1313,807.5 L1330.5,790.5 Q1332.5,788.8 1334.3,790.6 Q1336,792.5 1334.3,794.3 L1316.5,811 Z" fill="#2a2a2a"/><path d="M1318.5,804.5 L1327,796" stroke="#8a8a8a" stroke-width="1.4"/><path d="M1329,791.5 L1333,795.5" stroke="#f1f3f4" stroke-width="0.7"/><circle cx="1333.7" cy="812" r="2.6" fill="none" stroke="#2a2a2a" stroke-width="1.6"/><line x1="1333.7" y1="809.4" x2="1333.7" y2="803.8" stroke="#2a2a2a" stroke-width="1.5"/><line x1="1331" y1="813" x2="1317" y2="817.3" stroke="#2a2a2a" stroke-width="1.5"/><path d="M1314,818.2 L1319.5,814 L1320,819.3 Z" fill="#2a2a2a"/><rect x="1371.4" y="784.8" width="37.4" height="38.5" rx="9" fill="#10ab9a"/><path d="M1381,811.5 L1382.5,806.5 L1397.5,791.5 Q1399.5,789.8 1401.3,791.6 Q1403,793.5 1401.3,795.3 L1386,810.3 Z" fill="#1b1b1b"/><path d="M1396,793 L1399.8,796.8" stroke="#10ab9a" stroke-width="0.9"/><path d="M1383,807.5 L1385.5,810" stroke="#10ab9a" stroke-width="0.8"/><path d="M1381.5,815.5 Q1390,819.5 1397.5,815.5 Q1401,812.5 1398.5,810 Q1394.5,808 1390.5,812.5 Q1388.5,815.5 1392,815.8" fill="none" stroke="#1b1b1b" stroke-width="1.5"/><path d="M1452.5,799.5 L1453.5,788 Q1453.8,786.5 1455.5,786.5 H1485.5 Q1487.2,786.5 1487.5,788 L1488.5,799.5 Z" fill="#f1f3f4"/><path d="M1455.5,799 L1456.2,789.2 H1484.8 L1485.5,799 Z" fill="#2b2b2b"/><rect x="1456.5" y="790.6" width="28" height="1.7" fill="#9a9a9a"/><rect x="1456.5" y="793.6" width="28" height="1.7" fill="#9a9a9a"/><rect x="1456.5" y="796.6" width="28" height="1.7" fill="#9a9a9a"/><rect x="1450.3" y="799" width="40.3" height="23" rx="2.2" fill="#f1f3f4"/><rect x="1464" y="798.5" width="13" height="2.2" rx="1" fill="#2b2b2b"/><path d="M1462.6,806.5 V812.3 H1480 V806.5" fill="none" stroke="#2a2a2a" stroke-width="2.4"/><path d="M1524.1,809.5 L1542.8,800 L1561.5,809.5 V812.5 L1542.8,822.2 L1524.1,812.5 Z" fill="#f1f3f4" stroke="#f1f3f4" stroke-width="1" stroke-linejoin="round"/><path d="M1524.1,802 L1542.8,792.5 L1561.5,802 V805 L1542.8,814.5 L1524.1,805 Z" fill="#1e1e1e"/><path d="M1525.5,802.5 L1542.8,793.5 L1560,802.5 V804.5 L1542.8,813 L1525.5,804.5 Z" fill="#8f8f8f"/><path d="M1524.1,795.5 L1542.8,786 L1561.5,795.5 V798 L1542.8,807.5 L1524.1,798 Z" fill="#1e1e1e"/><path d="M1525.2,795.8 L1542.8,787.2 L1560.4,795.8 V797.5 L1542.8,806 L1525.2,797.5 Z" fill="#f1f3f4" stroke="#f1f3f4" stroke-width="1.2" stroke-linejoin="round"/><rect x="1594.2" y="784.8" width="37.8" height="38.1" rx="9" fill="#f1f3f4"/><path d="M1607.2,798.8 Q1607.2,791.8 1613.4,791.8 Q1619.6,791.8 1619.6,797.6 Q1619.6,801 1616.6,803 Q1613.6,805 1613.6,808.8" fill="none" stroke="#1e1e1e" stroke-width="4.2"/><rect x="1611.1" y="811.6" width="5" height="4.8" rx="0.8" fill="#1e1e1e"/></svg>
<div class="b" style="left:557px;top:818px;width:17px;height:54px;background:#4a4a4a;border-radius:0 17px 17px 0;"></div>
<svg class="b" style="left:555px;top:818px;" width="20" height="54" viewBox="0 0 20 54"><path d="M13,20 L6,26.5 L13,33" fill="none" stroke="#fff" stroke-width="2.1"/></svg>
<svg class="b" style="left:570px;top:800px;" width="70" height="70" viewBox="570 800 70 70"><circle cx="603" cy="835.4" r="28.2" fill="#2f2f2d"/><circle cx="599.5" cy="832" r="6.3" fill="none" stroke="#fff" stroke-width="2"/><line x1="604" y1="836.6" x2="611.5" y2="844.3" stroke="#fff" stroke-width="2.4"/><path d="M599.5,829 V835 M596.5,832 H602.5" stroke="#fff" stroke-width="1.2"/></svg>
<svg class="b" style="left:1775px;top:800px;" width="70" height="70" viewBox="1775 800 70 70"><circle cx="1810" cy="837" r="28.2" fill="#2e2e2c"/><path d="M1809.3,823 L1818.5,837.5 L1815.5,845 H1803 L1800,837.5 Z" fill="#e8e8e8"/><line x1="1809.3" y1="824" x2="1809.3" y2="835" stroke="#2e2e2c" stroke-width="0.8"/><circle cx="1809.3" cy="836.5" r="1.6" fill="none" stroke="#2e2e2c" stroke-width="0.8"/><rect x="1801.8" y="847.3" width="15.2" height="2.4" fill="#e8e8e8"/></svg>
<svg class="b" style="left:1870px;top:125px;" width="36" height="36" viewBox="1870 125 36 36"><path d="M1879.8,132.8 L1890.3,152.6 M1898,132.8 L1886.3,152.6" fill="none" stroke="#fff" stroke-width="3" stroke-linecap="round"/></svg>
<div class="b" style="left:1881px;top:402px;width:44px;height:125px;background:#3d6475;border-radius:6px;"></div>
<div class="t" style="left:1899.5px;top:504.2px;font-size:18.3px;line-height:18.3px;color:#f0f4f5;transform-origin:0 0;transform:rotate(-90deg);">Feedback</div>
<svg class="b" style="left:1860px;top:815px;" width="60" height="60" viewBox="0 0 60 60"><circle cx="28.6" cy="29.5" r="22.5" fill="#232c31"/><path d="M32,23.5 L25.5,29.5 L32,35.5" fill="none" stroke="#fff" stroke-width="2.2"/></svg>
</body></html>
